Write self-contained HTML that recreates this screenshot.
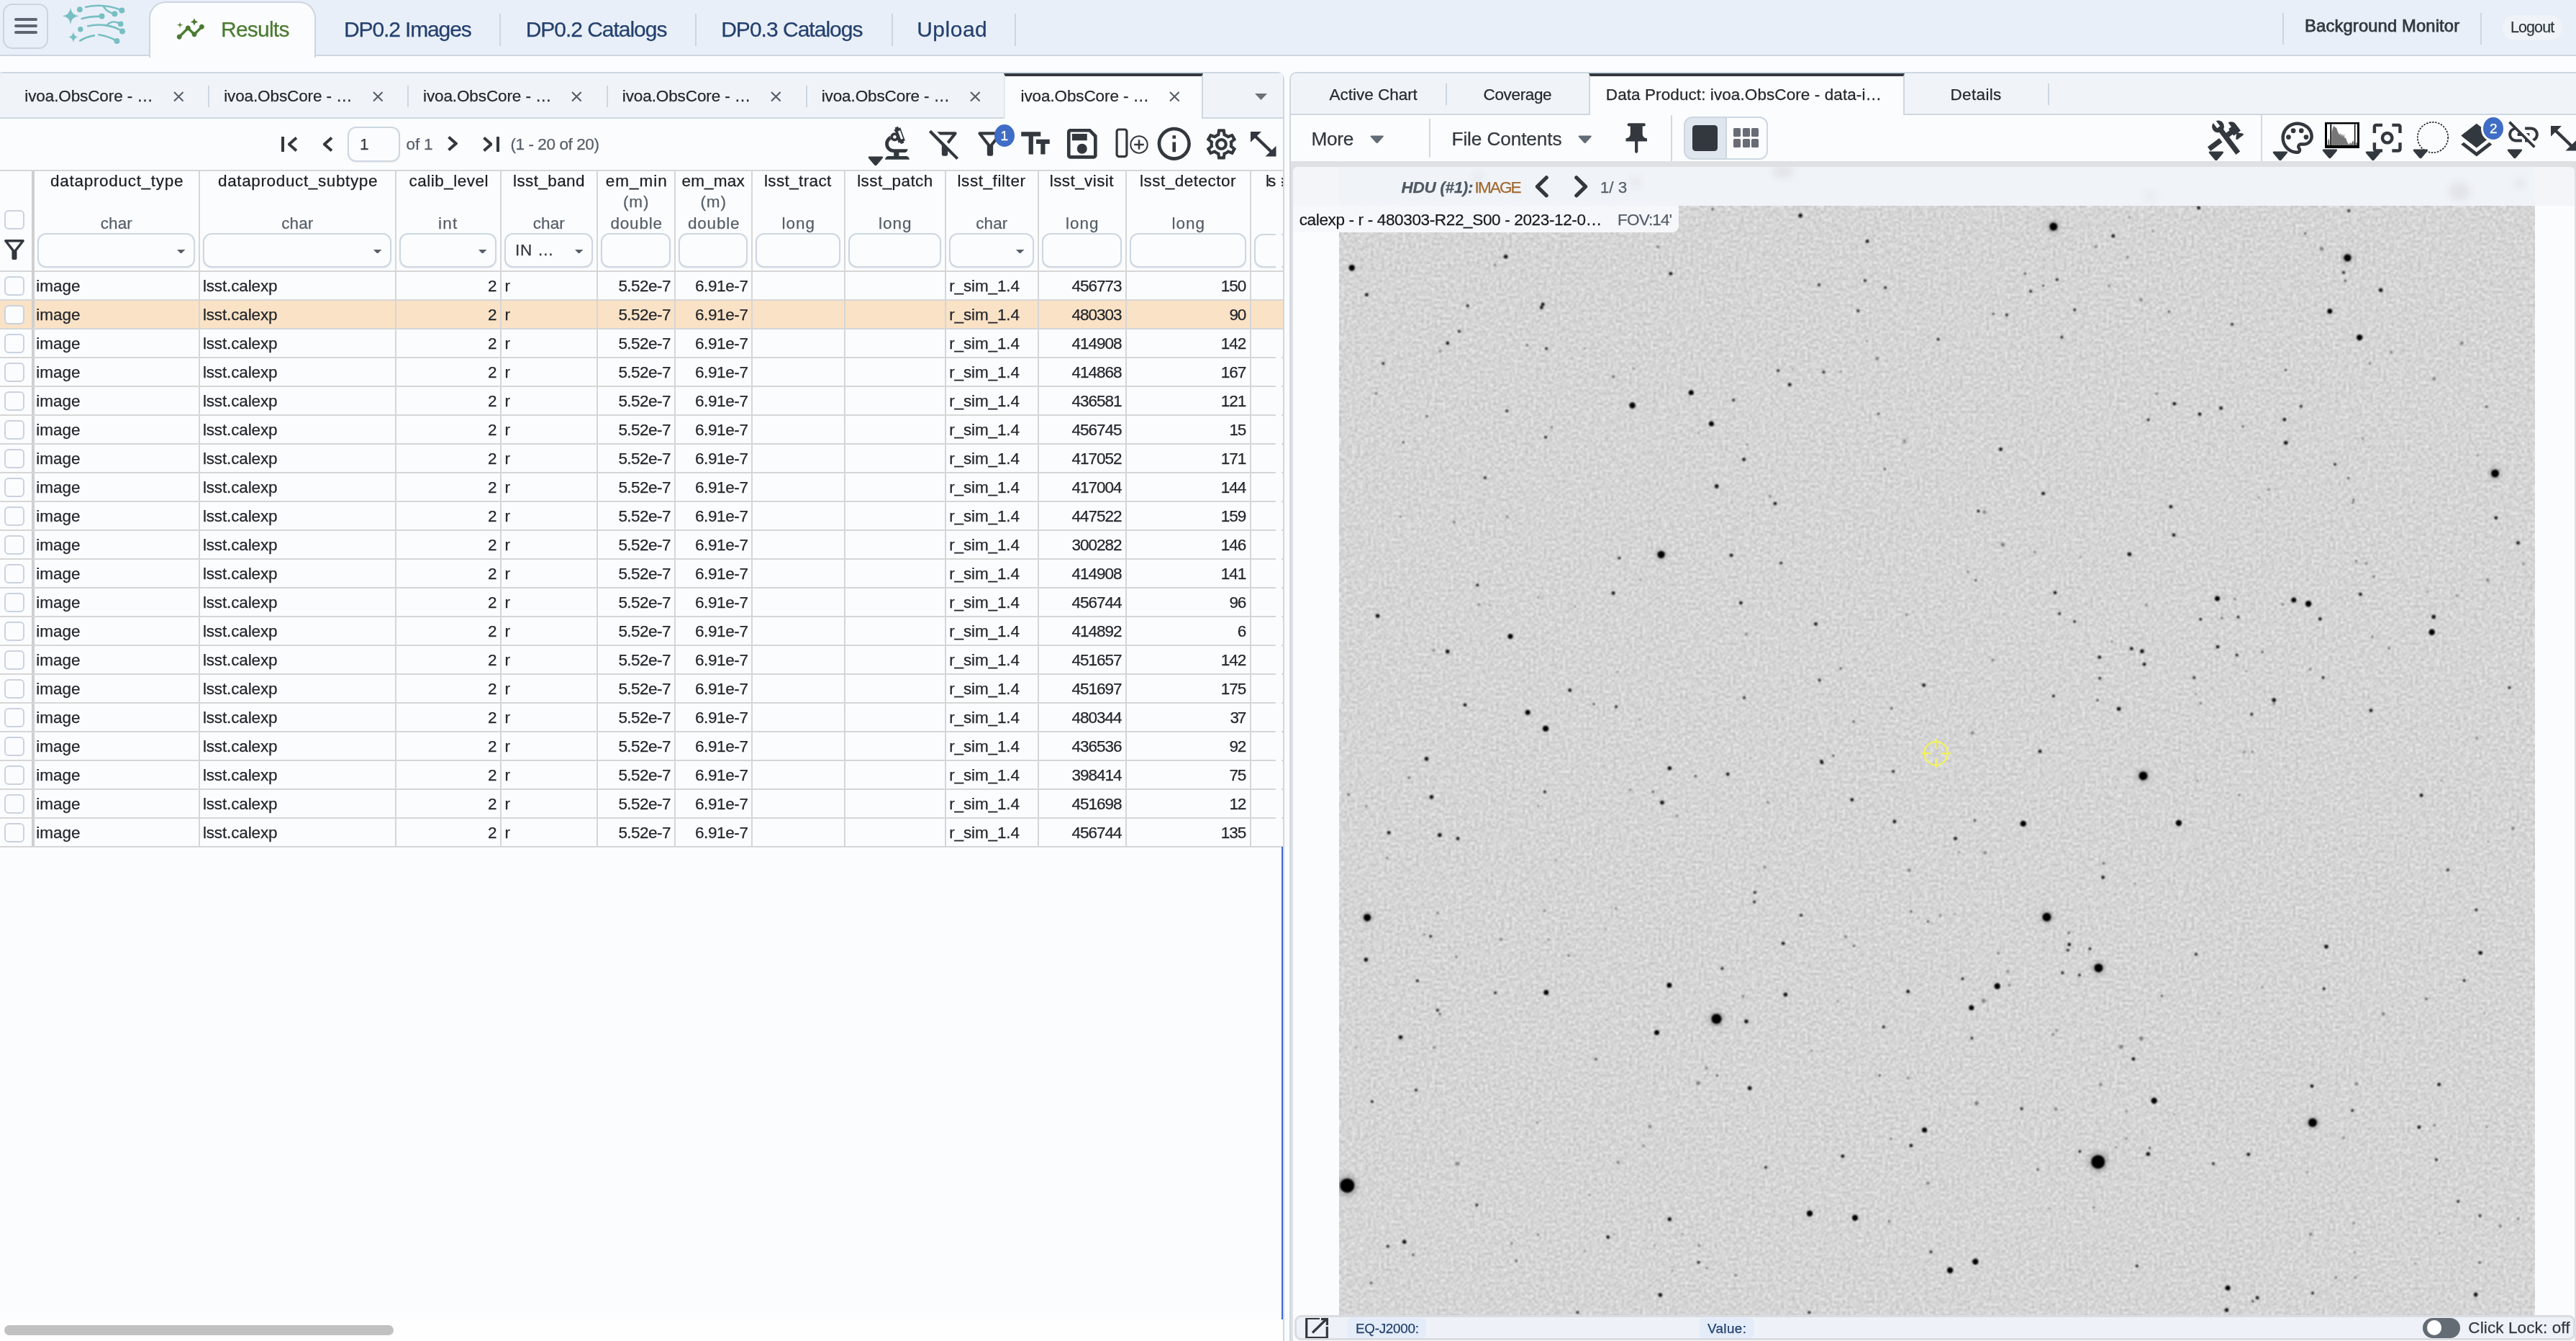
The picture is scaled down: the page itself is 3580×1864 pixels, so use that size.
<!DOCTYPE html>
<html lang="en"><head><meta charset="utf-8"><title>Rubin Science Platform Portal</title>
<style>
html,body{margin:0;padding:0;}
body{width:3580px;height:1864px;overflow:hidden;background:#FBFCFE;position:relative;font-family:"Liberation Sans",sans-serif;}
.b{position:absolute;box-sizing:border-box;display:block;}
.t{position:absolute;white-space:pre;line-height:normal;display:block;-webkit-text-stroke:0.25px currentColor;}
@media (max-width:2400px){#root{zoom:.5}}
#root{position:absolute;left:0;top:0;width:3580px;height:1864px;overflow:hidden;will-change:transform;}
</style></head><body><div id="root">
<div class="b" style="left:0px;top:0px;width:3580px;height:78px;background:#E9EFF8;border-bottom:2px solid #CDD5E1;"></div>
<div class="b" style="left:4px;top:5px;width:63px;height:63px;border:2px solid #CDD3DF;border-radius:13px;background:#E9EFF8;"></div>
<div class="b" style="left:20px;top:25.2px;width:32px;height:4px;background:#5F6470;border-radius:2px;"></div>
<div class="b" style="left:20px;top:34px;width:32px;height:4px;background:#5F6470;border-radius:2px;"></div>
<div class="b" style="left:20px;top:42.8px;width:32px;height:4px;background:#5F6470;border-radius:2px;"></div>
<svg class="b" style="left:80px;top:0px;filter:blur(0.5px);opacity:.95;" width="110" height="70" viewBox="80 0 110 70"><g fill="#72BDC1" stroke="none">
<path d="M98 10.8 Q99.2 21 109.8 22.2 Q99.2 23.4 98 33.8 Q96.8 23.4 86.6 22.2 Q96.8 21 98 10.8Z"/><circle cx="98" cy="22.2" r="3.4"/>
<path d="M101.9 44.2 Q102.7 50.8 108.8 51.6 Q102.7 52.4 101.9 59.3 Q101.1 52.4 94.9 51.6 Q101.1 50.8 101.9 44.2Z"/><circle cx="101.9" cy="51.6" r="2.2"/>
<circle cx="110.9" cy="13.2" r="3.9"/><circle cx="111.8" cy="40.8" r="3.7"/>
<circle cx="169.3" cy="14.4" r="4"/><circle cx="159.4" cy="19.2" r="4"/><circle cx="141.5" cy="22.6" r="4"/>
<circle cx="167.7" cy="33.4" r="3.8"/><circle cx="170" cy="43.6" r="4"/><circle cx="162.4" cy="57.1" r="4"/>
</g>
<g fill="none" stroke="#72BDC1" stroke-width="2.6" stroke-linecap="round">
<path d="M119.2 9.8 C134 6.4 152 7.6 169 14.2"/>
<path d="M144 9 C147 15 152 17.6 159 19.2"/>
<path d="M113.6 26 C122 23.4 132 22.6 141 22.6"/>
<path d="M122.2 36.2 C138 32.6 156 34.6 170 43.4"/>
<path d="M149.5 34.2 C154 29.6 161 29.4 167.5 33.2"/>
<path d="M111.2 56.6 C117 53 124 50.4 131 49.4"/>
<path d="M137.2 48.2 C146 49.4 155 52.6 162 56.8"/>
</g></svg>
<div class="b" style="left:207px;top:2px;width:232px;height:78px;background:#FBFCFE;border:2px solid #CDD5E1;border-bottom:none;border-radius:23px 23px 0 0;"></div>
<svg class="b" style="left:244.3px;top:20.3px;" width="41.6" height="41.6" viewBox="0 0 24 24"><g fill="#4B7A30"><path d="M21 8c-1.45 0-2.26 1.44-1.93 2.51l-3.55 3.56c-.3-.09-.74-.09-1.04 0l-2.55-2.55C12.27 10.45 11.46 9 10 9c-1.45 0-2.27 1.44-1.93 2.52l-4.56 4.55C2.44 15.74 1 16.55 1 18c0 1.1.9 2 2 2 1.45 0 2.26-1.44 1.93-2.51l4.55-4.56c.3.09.74.09 1.04 0l2.55 2.55C12.73 16.55 13.54 18 15 18c1.45 0 2.27-1.44 1.93-2.52l3.56-3.55c1.07.33 2.51-.48 2.51-1.93 0-1.1-.9-2-2-2z"/><path d="m15 9 .94-2.07L18 6l-2.06-.93L15 3l-.92 2.07L12 6l2.08.93zM3.5 11 4 9l2-.5L4 8l-.5-2L3 8l-2 .5L3 9z"/></g></svg>
<span class="t" style="left:307.00px;top:24.40px;font-size:30px;color:#4B7A30;letter-spacing:-0.772px;">Results</span>
<span class="t" style="left:478.00px;top:24.40px;font-size:30px;color:#24406E;letter-spacing:-1.127px;">DP0.2 Images</span>
<span class="t" style="left:730.70px;top:24.40px;font-size:30px;color:#24406E;letter-spacing:-1.032px;">DP0.2 Catalogs</span>
<span class="t" style="left:1002.20px;top:24.40px;font-size:30px;color:#24406E;letter-spacing:-0.986px;">DP0.3 Catalogs</span>
<span class="t" style="left:1274.20px;top:24.40px;font-size:30px;color:#24406E;letter-spacing:0.503px;">Upload</span>
<div class="b" style="left:693.6px;top:19px;width:2px;height:45px;background:#CDD5E1;"></div>
<div class="b" style="left:965.6px;top:19px;width:2px;height:45px;background:#CDD5E1;"></div>
<div class="b" style="left:1238.5px;top:19px;width:2px;height:45px;background:#CDD5E1;"></div>
<div class="b" style="left:1409.7px;top:19px;width:2px;height:45px;background:#CDD5E1;"></div>
<div class="b" style="left:3172px;top:18px;width:2px;height:44px;background:#CDD5E1;"></div>
<div class="b" style="left:3447.3px;top:18px;width:2px;height:44px;background:#CDD5E1;"></div>
<span class="t" style="left:3203.10px;top:22.10px;font-size:23.8px;color:#32383E;letter-spacing:0.121px;-webkit-text-stroke:0.75px #32383E;">Background Monitor</span>
<div class="b" style="left:3478px;top:20.5px;width:83px;height:35.5px;background:#F0F4F8;border-radius:18px;"></div>
<span class="t" style="left:3489.00px;top:26.40px;font-size:21.5px;color:#32383E;letter-spacing:-0.917px;">Logout</span>
<div class="b" style="left:-5px;top:100px;width:1790px;height:1800px;border:2px solid #CDD7E1;border-radius:10px;background:#FBFCFE;overflow:hidden;"></div>
<div class="b" style="left:0px;top:102px;width:1783px;height:63px;background:#F0F4F8;border-bottom:2px solid #CDD7E1;"></div>
<div class="b" style="left:289.0px;top:118.5px;width:2px;height:30.5px;background:#CDD7E1;"></div>
<span class="t" style="left:34.30px;top:120.60px;font-size:22.5px;color:#25282C;letter-spacing:-0.110px;">ivoa.ObsCore - …</span>
<svg class="b" style="left:240.7px;top:126.9px;" width="14.6" height="14.6" viewBox="0 0 14.6 14.6"><path d="M1 1L13.6 13.6M13.6 1L1 13.6" stroke="#555E68" stroke-width="2.1" fill="none"/></svg>
<div class="b" style="left:565.85px;top:118.5px;width:2px;height:30.5px;background:#CDD7E1;"></div>
<span class="t" style="left:311.15px;top:120.60px;font-size:22.5px;color:#25282C;letter-spacing:-0.110px;">ivoa.ObsCore - …</span>
<svg class="b" style="left:517.5500000000001px;top:126.9px;" width="14.6" height="14.6" viewBox="0 0 14.6 14.6"><path d="M1 1L13.6 13.6M13.6 1L1 13.6" stroke="#555E68" stroke-width="2.1" fill="none"/></svg>
<div class="b" style="left:842.7px;top:118.5px;width:2px;height:30.5px;background:#CDD7E1;"></div>
<span class="t" style="left:588.00px;top:120.60px;font-size:22.5px;color:#25282C;letter-spacing:-0.110px;">ivoa.ObsCore - …</span>
<svg class="b" style="left:794.4px;top:126.9px;" width="14.6" height="14.6" viewBox="0 0 14.6 14.6"><path d="M1 1L13.6 13.6M13.6 1L1 13.6" stroke="#555E68" stroke-width="2.1" fill="none"/></svg>
<div class="b" style="left:1119.5500000000002px;top:118.5px;width:2px;height:30.5px;background:#CDD7E1;"></div>
<span class="t" style="left:864.85px;top:120.60px;font-size:22.5px;color:#25282C;letter-spacing:-0.110px;">ivoa.ObsCore - …</span>
<svg class="b" style="left:1071.25px;top:126.9px;" width="14.6" height="14.6" viewBox="0 0 14.6 14.6"><path d="M1 1L13.6 13.6M13.6 1L1 13.6" stroke="#555E68" stroke-width="2.1" fill="none"/></svg>
<span class="t" style="left:1141.70px;top:120.60px;font-size:22.5px;color:#25282C;letter-spacing:-0.110px;">ivoa.ObsCore - …</span>
<svg class="b" style="left:1348.1000000000001px;top:126.9px;" width="14.6" height="14.6" viewBox="0 0 14.6 14.6"><path d="M1 1L13.6 13.6M13.6 1L1 13.6" stroke="#555E68" stroke-width="2.1" fill="none"/></svg>
<div class="b" style="left:1394.9px;top:102px;width:277.1px;height:63px;background:#FBFCFE;border-top:4px solid #32383E;border-right:2px solid #CDD7E1;border-left:2px solid #E3E8EE;"></div>
<span class="t" style="left:1418.55px;top:120.60px;font-size:22.5px;color:#25282C;letter-spacing:-0.110px;">ivoa.ObsCore - …</span>
<svg class="b" style="left:1624.95px;top:126.9px;" width="14.6" height="14.6" viewBox="0 0 14.6 14.6"><path d="M1 1L13.6 13.6M13.6 1L1 13.6" stroke="#555E68" stroke-width="2.1" fill="none"/></svg>
<svg class="b" style="left:1743.5px;top:130.4px;" width="17" height="9" viewBox="0 0 17 9"><path d="M0 0H17L8.5 9Z" fill="#6B7079"/></svg>
<div class="b" style="left:391.3px;top:189.6px;width:4px;height:21px;background:#32383E;"></div>
<svg class="b" style="left:399.6px;top:189.6px;" width="13.5" height="21" viewBox="0 0 13.5 21"><path d="M12.0 1.5L1.8 10.5L12.0 19.5" stroke="#32383E" stroke-width="4" fill="none" stroke-linejoin="miter"/></svg>
<svg class="b" style="left:449px;top:189.6px;" width="13.5" height="21" viewBox="0 0 13.5 21"><path d="M12.0 1.5L1.8 10.5L12.0 19.5" stroke="#32383E" stroke-width="4" fill="none" stroke-linejoin="miter"/></svg>
<div class="b" style="left:483.3px;top:176.2px;width:72.6px;height:48.4px;border:2px solid #CDD7E1;border-radius:12px;background:#FBFCFE;box-shadow:0 1px 2px rgba(21,21,21,.07);"></div>
<span class="t" style="left:500.00px;top:188.20px;font-size:22.5px;color:#32383E;">1</span>
<span class="t" style="left:564.60px;top:188.20px;font-size:22.5px;color:#555E68;letter-spacing:-0.205px;">of 1</span>
<svg class="b" style="left:622.3px;top:189.2px;" width="13.5" height="21" viewBox="0 0 13.5 21"><path d="M1.5 1.5L11.7 10.5L1.5 19.5" stroke="#32383E" stroke-width="4" fill="none" stroke-linejoin="miter"/></svg>
<svg class="b" style="left:670.8px;top:189.6px;" width="13.5" height="21" viewBox="0 0 13.5 21"><path d="M1.5 1.5L11.7 10.5L1.5 19.5" stroke="#32383E" stroke-width="4" fill="none" stroke-linejoin="miter"/></svg>
<div class="b" style="left:690.1px;top:189.6px;width:4px;height:21px;background:#32383E;"></div>
<span class="t" style="left:709.40px;top:188.40px;font-size:22.5px;color:#555E68;letter-spacing:-0.409px;">(1 - 20 of 20)</span>
<svg class="b" style="left:1206px;top:217.2px;" width="21.8" height="13.6" viewBox="0 0 21.8 13.6"><path d="M2.2 0.6H19.6Q22.400000000000002 0.8 20.2 3.4L12.5 12.6Q10.9 14.0 9.3 12.6L1.6 3.4Q-0.6 0.8 2.2 0.6Z" fill="#32383E"/></svg>
<svg class="b" style="left:1218.1px;top:171.4px;" width="58" height="58" viewBox="0 0 24 24"><g fill="#32383E"><path d="M7 19c-1.1 0-2 .9-2 2h14c0-1.1-.9-2-2-2h-4v-2h3c1.1 0 2-.9 2-2h-8c-1.66 0-3-1.34-3-3 0-1.09.59-2.04 1.46-2.56C8.17 9.03 8 8.54 8 8c0-.21.04-.42.09-.62C6.28 8.13 5 9.92 5 12c0 2.76 2.24 5 5 5v2H7z"/><circle cx="10.5" cy="8" r="2.5"/><path d="M10 3.98L10.94 3.63L10.6 2.69L12.48 2.01L12.82 2.95L13.76 2.61L16.5 10.13L15.56 10.47L15.9 11.41L14.02 12.09L13.68 11.15L12.74 11.49L12.15 9.87L11.5 6Z"/></g><circle cx="10.5" cy="8" r="0.95" fill="#FBFCFE"/><path d="M13.0 4.5L14.72 9.22" stroke="#FBFCFE" stroke-width="1.35" fill="none"/></svg>
<svg class="b" style="left:1288.2px;top:175.1px;" width="50" height="50" viewBox="0 0 24 24"><path fill="#32383E" d="m16.95 6-3.57 4.55 1.43 1.43c1.03-1.31 4.98-6.37 4.98-6.37C20.3 4.95 19.83 4 19 4H6.83l2 2h8.12zM2.81 2.81 1.39 4.22 10 13v6c0 .55.45 1 1 1h2c.55 0 1-.45 1-1v-2.17l5.78 5.78 1.41-1.41L2.81 2.81z"/></svg>
<svg class="b" style="left:1350.9px;top:175.1px;" width="50" height="50" viewBox="0 0 24 24"><path fill="#32383E" d="M7 6h10l-5.01 6.3L7 6zm-2.75-.39C6.27 8.2 10 13 10 13v6c0 .55.45 1 1 1h2c.55 0 1-.45 1-1v-6s3.72-4.8 5.74-7.39c.51-.66.04-1.61-.79-1.61H5.04c-.83 0-1.3.95-.79 1.61z"/></svg>
<div class="b" style="left:1381.8px;top:173.2px;width:28.2px;height:30.8px;background:#3F6DC5;border-radius:50%;"></div>
<span class="t" style="left:1390.40px;top:178.40px;font-size:19px;color:#fff;">1</span>
<svg class="b" style="left:1413.5px;top:175.1px;" width="50" height="50" viewBox="0 0 24 24"><path fill="#32383E" d="M2.5 4v3h5v12h3V7h5V4h-13zm19 5h-9v3h3v7h3v-7h3V9z"/></svg>
<svg class="b" style="left:1476px;top:172.1px;" width="55.6" height="55.6" viewBox="0 0 24 24"><path fill="#32383E" d="M17 3H5c-1.11 0-2 .9-2 2v14c0 1.1.89 2 2 2h14c1.1 0 2-.9 2-2V7l-4-4zm2 16H5V5h11.17L19 7.83V19zm-7-7c-1.66 0-3 1.34-3 3s1.34 3 3 3 3-1.34 3-3-1.34-3-3-3zM6 6h9v4H6z"/></svg>
<svg class="b" style="left:1548px;top:176px;" width="52" height="46" viewBox="0 0 52 46"><rect x="4.1" y="4" width="13.8" height="37.6" rx="3" fill="none" stroke="#32383E" stroke-width="3.2"/><circle cx="35" cy="25" r="11.7" fill="none" stroke="#32383E" stroke-width="2"/><path d="M28.2 25H41.8M35 18.2V31.8" stroke="#32383E" stroke-width="2.5" fill="none"/></svg>
<svg class="b" style="left:1604.3px;top:172.3px;" width="55.5" height="55.5" viewBox="0 0 24 24"><path fill="#32383E" d="M11 7h2v2h-2zm0 4h2v6h-2zm1-9C6.48 2 2 6.48 2 12s4.48 10 10 10 10-4.48 10-10S17.52 2 12 2zm0 18c-4.41 0-8-3.59-8-8s3.59-8 8-8 8 3.59 8 8-3.59 8-8 8z"/></svg>
<svg class="b" style="left:1672.1px;top:174.8px;" width="50.8" height="50.8" viewBox="0 0 24 24"><path fill="#32383E" d="M19.43 12.98c.04-.32.07-.64.07-.98 0-.34-.03-.66-.07-.98l2.11-1.65c.19-.15.24-.42.12-.64l-2-3.46c-.09-.16-.26-.25-.44-.25-.06 0-.12.01-.17.03l-2.49 1c-.52-.4-1.08-.73-1.69-.98l-.38-2.65C14.46 2.18 14.25 2 14 2h-4c-.25 0-.46.18-.49.42l-.38 2.65c-.61.25-1.17.59-1.69.98l-2.49-1c-.06-.02-.12-.03-.18-.03-.17 0-.34.09-.43.25l-2 3.46c-.13.22-.07.49.12.64l2.11 1.65c-.04.32-.07.65-.07.98 0 .33.03.66.07.98l-2.11 1.65c-.19.15-.24.42-.12.64l2 3.46c.09.16.26.25.44.25.06 0 .12-.01.17-.03l2.49-1c.52.4 1.08.73 1.69.98l.38 2.65c.03.24.24.42.49.42h4c.25 0 .46-.18.49-.42l.38-2.65c.61-.25 1.17-.59 1.69-.98l2.49 1c.06.02.12.03.18.03.17 0 .34-.09.43-.25l2-3.46c.12-.22.07-.49-.12-.64l-2.11-1.65zm-1.98-1.71c.04.31.05.52.05.73 0 .21-.02.43-.05.73l-.14 1.13.89.7 1.08.84-.7 1.21-1.27-.51-1.04-.42-.9.68c-.43.32-.84.56-1.25.73l-1.06.43-.16 1.13-.2 1.35h-1.4l-.19-1.35-.16-1.13-1.06-.43c-.43-.18-.83-.41-1.23-.71l-.91-.7-1.06.43-1.27.51-.7-1.21 1.08-.84.89-.7-.14-1.13c-.03-.31-.05-.54-.05-.74s.02-.43.05-.73l.14-1.13-.89-.7-1.08-.84.7-1.21 1.27.51 1.04.42.9-.68c.43-.32.84-.56 1.25-.73l1.06-.43.16-1.13.2-1.35h1.39l.19 1.35.16 1.13 1.06.43c.43.18.83.41 1.23.71l.91.7 1.06-.43 1.27-.51.7 1.21-1.07.85-.89.7.14 1.13zM12 8c-2.21 0-4 1.79-4 4s1.79 4 4 4 4-1.79 4-4-1.79-4-4-4zm0 6c-1.1 0-2-.9-2-2s.9-2 2-2 2 .9 2 2-.9 2-2 2z"/></svg>
<svg class="b" style="left:1738.3px;top:182.8px;" width="36" height="35" viewBox="0 0 36 35"><path d="M0 0H15L0 14.8Z M35.5 34.5H20.5L35.5 19.7Z" fill="#32383E"/><path d="M5 5L30.5 29.5" stroke="#32383E" stroke-width="4.4"/></svg>
<div class="b" style="left:0px;top:236px;width:1783px;height:2px;background:#D6D6D6;"></div>
<div class="b" style="left:0px;top:376px;width:1783px;height:2px;background:#D6D6D6;"></div>
<div class="b" style="left:44.3px;top:238px;width:4px;height:938px;background:#CFCFCF;"></div>
<span class="t" style="left:70.10px;top:238.50px;font-size:22.5px;color:#1B1E22;letter-spacing:0.696px;">dataproduct_type</span>
<span class="t" style="left:139.65px;top:297.50px;font-size:22.5px;color:#555E68;letter-spacing:0.141px;">char</span>
<div class="b" style="left:276px;top:238px;width:2px;height:938px;background:#D6D6D6;"></div>
<div class="b" style="left:51.8px;top:324.2px;width:219.2px;height:47.8px;border:2px solid #CDD7E1;border-radius:12px;background:#FBFCFE;box-shadow:0 1px 2px rgba(21,21,21,.07);"></div>
<svg class="b" style="left:245.8px;top:346.5px;" width="11.2" height="5.8" viewBox="0 0 11.2 5.8"><path d="M0 0H11.2L5.6 5.8Z" fill="#555E68"/></svg>
<span class="t" style="left:303.10px;top:238.50px;font-size:22.5px;color:#1B1E22;letter-spacing:0.620px;">dataproduct_subtype</span>
<span class="t" style="left:391.15px;top:297.50px;font-size:22.5px;color:#555E68;letter-spacing:0.141px;">char</span>
<div class="b" style="left:549px;top:238px;width:2px;height:938px;background:#D6D6D6;"></div>
<div class="b" style="left:281.8px;top:324.2px;width:262.2px;height:47.8px;border:2px solid #CDD7E1;border-radius:12px;background:#FBFCFE;box-shadow:0 1px 2px rgba(21,21,21,.07);"></div>
<svg class="b" style="left:518.8px;top:346.5px;" width="11.2" height="5.8" viewBox="0 0 11.2 5.8"><path d="M0 0H11.2L5.6 5.8Z" fill="#555E68"/></svg>
<span class="t" style="left:568.50px;top:238.50px;font-size:22.5px;color:#1B1E22;letter-spacing:0.494px;">calib_level</span>
<span class="t" style="left:608.90px;top:297.50px;font-size:22.5px;color:#555E68;letter-spacing:1.344px;">int</span>
<div class="b" style="left:695px;top:238px;width:2px;height:938px;background:#D6D6D6;"></div>
<div class="b" style="left:554.8px;top:324.2px;width:135.20000000000005px;height:47.8px;border:2px solid #CDD7E1;border-radius:12px;background:#FBFCFE;box-shadow:0 1px 2px rgba(21,21,21,.07);"></div>
<svg class="b" style="left:664.8px;top:346.5px;" width="11.2" height="5.8" viewBox="0 0 11.2 5.8"><path d="M0 0H11.2L5.6 5.8Z" fill="#555E68"/></svg>
<span class="t" style="left:713.05px;top:238.50px;font-size:22.5px;color:#1B1E22;letter-spacing:0.387px;">lsst_band</span>
<span class="t" style="left:740.65px;top:297.50px;font-size:22.5px;color:#555E68;letter-spacing:0.141px;">char</span>
<div class="b" style="left:829px;top:238px;width:2px;height:938px;background:#D6D6D6;"></div>
<div class="b" style="left:700.8px;top:324.2px;width:123.20000000000005px;height:47.8px;border:2px solid #CDD7E1;border-radius:12px;background:#FBFCFE;box-shadow:0 1px 2px rgba(21,21,21,.07);"></div>
<svg class="b" style="left:798.8px;top:346.5px;" width="11.2" height="5.8" viewBox="0 0 11.2 5.8"><path d="M0 0H11.2L5.6 5.8Z" fill="#555E68"/></svg>
<span class="t" style="left:716.00px;top:334.50px;font-size:22.5px;color:#32383E;letter-spacing:0.750px;">IN …</span>
<span class="t" style="left:841.85px;top:238.50px;font-size:22.5px;color:#1B1E22;letter-spacing:0.958px;">em_min</span>
<span class="t" style="left:865.95px;top:267.50px;font-size:22.5px;color:#555E68;letter-spacing:0.932px;">(m)</span>
<span class="t" style="left:848.50px;top:297.50px;font-size:22.5px;color:#555E68;letter-spacing:0.790px;">double</span>
<div class="b" style="left:937px;top:238px;width:2px;height:938px;background:#D6D6D6;"></div>
<div class="b" style="left:834.8px;top:324.2px;width:97.20000000000005px;height:47.8px;border:2px solid #CDD7E1;border-radius:12px;background:#FBFCFE;box-shadow:0 1px 2px rgba(21,21,21,.07);"></div>
<span class="t" style="left:947.45px;top:238.50px;font-size:22.5px;color:#1B1E22;letter-spacing:0.215px;">em_max</span>
<span class="t" style="left:973.45px;top:267.50px;font-size:22.5px;color:#555E68;letter-spacing:0.932px;">(m)</span>
<span class="t" style="left:956.00px;top:297.50px;font-size:22.5px;color:#555E68;letter-spacing:0.790px;">double</span>
<div class="b" style="left:1044px;top:238px;width:2px;height:938px;background:#D6D6D6;"></div>
<div class="b" style="left:942.8px;top:324.2px;width:96.20000000000005px;height:47.8px;border:2px solid #CDD7E1;border-radius:12px;background:#FBFCFE;box-shadow:0 1px 2px rgba(21,21,21,.07);"></div>
<span class="t" style="left:1061.90px;top:238.50px;font-size:22.5px;color:#1B1E22;letter-spacing:0.381px;">lsst_tract</span>
<span class="t" style="left:1086.55px;top:297.50px;font-size:22.5px;color:#555E68;letter-spacing:0.958px;">long</span>
<div class="b" style="left:1173px;top:238px;width:2px;height:938px;background:#D6D6D6;"></div>
<div class="b" style="left:1049.8px;top:324.2px;width:118.20000000000005px;height:47.8px;border:2px solid #CDD7E1;border-radius:12px;background:#FBFCFE;box-shadow:0 1px 2px rgba(21,21,21,.07);"></div>
<span class="t" style="left:1191.20px;top:238.50px;font-size:22.5px;color:#1B1E22;letter-spacing:0.423px;">lsst_patch</span>
<span class="t" style="left:1221.05px;top:297.50px;font-size:22.5px;color:#555E68;letter-spacing:0.958px;">long</span>
<div class="b" style="left:1313px;top:238px;width:2px;height:938px;background:#D6D6D6;"></div>
<div class="b" style="left:1178.8px;top:324.2px;width:129.20000000000005px;height:47.8px;border:2px solid #CDD7E1;border-radius:12px;background:#FBFCFE;box-shadow:0 1px 2px rgba(21,21,21,.07);"></div>
<span class="t" style="left:1330.50px;top:238.50px;font-size:22.5px;color:#1B1E22;letter-spacing:0.572px;">lsst_filter</span>
<span class="t" style="left:1356.15px;top:297.50px;font-size:22.5px;color:#555E68;letter-spacing:0.141px;">char</span>
<div class="b" style="left:1442px;top:238px;width:2px;height:938px;background:#D6D6D6;"></div>
<div class="b" style="left:1318.8px;top:324.2px;width:118.20000000000005px;height:47.8px;border:2px solid #CDD7E1;border-radius:12px;background:#FBFCFE;box-shadow:0 1px 2px rgba(21,21,21,.07);"></div>
<svg class="b" style="left:1411.8px;top:346.5px;" width="11.2" height="5.8" viewBox="0 0 11.2 5.8"><path d="M0 0H11.2L5.6 5.8Z" fill="#555E68"/></svg>
<span class="t" style="left:1458.75px;top:238.50px;font-size:22.5px;color:#1B1E22;letter-spacing:0.415px;">lsst_visit</span>
<span class="t" style="left:1481.05px;top:297.50px;font-size:22.5px;color:#555E68;letter-spacing:0.958px;">long</span>
<div class="b" style="left:1564px;top:238px;width:2px;height:938px;background:#D6D6D6;"></div>
<div class="b" style="left:1447.8px;top:324.2px;width:111.20000000000005px;height:47.8px;border:2px solid #CDD7E1;border-radius:12px;background:#FBFCFE;box-shadow:0 1px 2px rgba(21,21,21,.07);"></div>
<span class="t" style="left:1584.10px;top:238.50px;font-size:22.5px;color:#1B1E22;letter-spacing:0.478px;">lsst_detector</span>
<span class="t" style="left:1628.55px;top:297.50px;font-size:22.5px;color:#555E68;letter-spacing:0.958px;">long</span>
<div class="b" style="left:1737px;top:238px;width:2px;height:938px;background:#D6D6D6;"></div>
<div class="b" style="left:1569.8px;top:324.2px;width:162.20000000000005px;height:47.8px;border:2px solid #CDD7E1;border-radius:12px;background:#FBFCFE;box-shadow:0 1px 2px rgba(21,21,21,.07);"></div>
<span class="t" style="left:1759.00px;top:238.50px;font-size:22.5px;color:#1B1E22;letter-spacing:-1.899px;">ls</span>
<div class="b" style="left:1780.6px;top:238px;width:2.7px;height:40px;overflow:hidden"><span class="t" style="left:-6.2px;top:0.5px;font-size:22.5px;color:#1B1E22">s</span></div>
<div class="b" style="left:1742px;top:325px;width:31.1px;height:52px;overflow:hidden"><div class="b" style="left:1.3px;top:0;width:80px;height:47px;border:2px solid #CDD7E1;border-radius:12px;background:#FBFCFE;box-shadow:0 1px 2px rgba(21,21,21,.07);"></div></div>
<div class="b" style="left:1780.6px;top:325px;width:2.7px;height:52px;overflow:hidden"><div class="b" style="left:-37.3px;top:0;width:80px;height:47px;border:2px solid #CDD7E1;border-radius:12px;background:#FBFCFE;box-shadow:0 1px 2px rgba(21,21,21,.07);"></div></div>
<div class="b" style="left:6.3px;top:291.6px;width:27.4px;height:27px;border:2px solid #C9D3DF;border-radius:6px;background:#FBFCFE;"></div>
<svg class="b" style="left:-0.75px;top:325.5px;" width="41.9" height="41.9" viewBox="0 0 24 24"><path fill="#32383E" d="M7 6h10l-5.01 6.3L7 6zm-2.75-.39C6.27 8.2 10 13 10 13v6c0 .55.45 1 1 1h2c.55 0 1-.45 1-1v-6s3.72-4.8 5.74-7.39c.51-.66.04-1.61-.79-1.61H5.04c-.83 0-1.3.95-.79 1.61z"/></svg>
<div class="b" style="left:0px;top:416px;width:1783.3px;height:2px;background:#D6D6D6;"></div>
<div class="b" style="left:6.3px;top:383.6px;width:27.4px;height:27px;border:2px solid #C9D3DF;border-radius:6px;background:#FBFCFE;"></div>
<span class="t" style="left:50.20px;top:384.80px;font-size:22.5px;color:#23262B;letter-spacing:0.008px;">image</span>
<span class="t" style="left:281.90px;top:384.80px;font-size:22.5px;color:#23262B;letter-spacing:-0.133px;">lsst.calexp</span>
<span class="t" style="left:678.00px;top:384.80px;font-size:22.5px;color:#23262B;">2</span>
<span class="t" style="left:701.50px;top:384.80px;font-size:22.5px;color:#23262B;">r</span>
<span class="t" style="left:859.40px;top:384.80px;font-size:22.5px;color:#23262B;letter-spacing:-0.533px;">5.52e-7</span>
<span class="t" style="left:965.90px;top:384.80px;font-size:22.5px;color:#23262B;letter-spacing:-0.366px;">6.91e-7</span>
<span class="t" style="left:1319.20px;top:384.80px;font-size:22.5px;color:#23262B;letter-spacing:-0.122px;">r_sim_1.4</span>
<span class="t" style="left:1489.40px;top:384.80px;font-size:22.5px;color:#23262B;letter-spacing:-1.013px;">456773</span>
<span class="t" style="left:1696.75px;top:384.80px;font-size:22.5px;color:#23262B;letter-spacing:-1.038px;">150</span>
<div class="b" style="left:0px;top:418px;width:1783px;height:38px;background:#FAE2C6;"></div>
<div class="b" style="left:44.3px;top:418px;width:4px;height:38px;background:#CFCFCF;"></div>
<div class="b" style="left:276px;top:418px;width:2px;height:38px;background:#D6D6D6;"></div>
<div class="b" style="left:549px;top:418px;width:2px;height:38px;background:#D6D6D6;"></div>
<div class="b" style="left:695px;top:418px;width:2px;height:38px;background:#D6D6D6;"></div>
<div class="b" style="left:829px;top:418px;width:2px;height:38px;background:#D6D6D6;"></div>
<div class="b" style="left:937px;top:418px;width:2px;height:38px;background:#D6D6D6;"></div>
<div class="b" style="left:1044px;top:418px;width:2px;height:38px;background:#D6D6D6;"></div>
<div class="b" style="left:1173px;top:418px;width:2px;height:38px;background:#D6D6D6;"></div>
<div class="b" style="left:1313px;top:418px;width:2px;height:38px;background:#D6D6D6;"></div>
<div class="b" style="left:1442px;top:418px;width:2px;height:38px;background:#D6D6D6;"></div>
<div class="b" style="left:1564px;top:418px;width:2px;height:38px;background:#D6D6D6;"></div>
<div class="b" style="left:1737px;top:418px;width:2px;height:38px;background:#D6D6D6;"></div>
<div class="b" style="left:0px;top:456px;width:1783.3px;height:2px;background:#D6D6D6;"></div>
<div class="b" style="left:6.3px;top:423.6px;width:27.4px;height:27px;border:2px solid #C9D3DF;border-radius:6px;background:#FBFCFE;"></div>
<span class="t" style="left:50.20px;top:424.80px;font-size:22.5px;color:#23262B;letter-spacing:0.008px;">image</span>
<span class="t" style="left:281.90px;top:424.80px;font-size:22.5px;color:#23262B;letter-spacing:-0.133px;">lsst.calexp</span>
<span class="t" style="left:678.00px;top:424.80px;font-size:22.5px;color:#23262B;">2</span>
<span class="t" style="left:701.50px;top:424.80px;font-size:22.5px;color:#23262B;">r</span>
<span class="t" style="left:859.40px;top:424.80px;font-size:22.5px;color:#23262B;letter-spacing:-0.533px;">5.52e-7</span>
<span class="t" style="left:965.90px;top:424.80px;font-size:22.5px;color:#23262B;letter-spacing:-0.366px;">6.91e-7</span>
<span class="t" style="left:1319.20px;top:424.80px;font-size:22.5px;color:#23262B;letter-spacing:-0.122px;">r_sim_1.4</span>
<span class="t" style="left:1489.40px;top:424.80px;font-size:22.5px;color:#23262B;letter-spacing:-1.013px;">480303</span>
<span class="t" style="left:1708.60px;top:424.80px;font-size:22.5px;color:#23262B;letter-spacing:-1.413px;">90</span>
<div class="b" style="left:0px;top:496px;width:1773px;height:2px;background:#D6D6D6;"></div>
<div class="b" style="left:1781px;top:496px;width:2.3px;height:2px;background:#D6D6D6;"></div>
<div class="b" style="left:6.3px;top:463.6px;width:27.4px;height:27px;border:2px solid #C9D3DF;border-radius:6px;background:#FBFCFE;"></div>
<span class="t" style="left:50.20px;top:464.80px;font-size:22.5px;color:#23262B;letter-spacing:0.008px;">image</span>
<span class="t" style="left:281.90px;top:464.80px;font-size:22.5px;color:#23262B;letter-spacing:-0.133px;">lsst.calexp</span>
<span class="t" style="left:678.00px;top:464.80px;font-size:22.5px;color:#23262B;">2</span>
<span class="t" style="left:701.50px;top:464.80px;font-size:22.5px;color:#23262B;">r</span>
<span class="t" style="left:859.40px;top:464.80px;font-size:22.5px;color:#23262B;letter-spacing:-0.533px;">5.52e-7</span>
<span class="t" style="left:965.90px;top:464.80px;font-size:22.5px;color:#23262B;letter-spacing:-0.366px;">6.91e-7</span>
<span class="t" style="left:1319.20px;top:464.80px;font-size:22.5px;color:#23262B;letter-spacing:-0.122px;">r_sim_1.4</span>
<span class="t" style="left:1489.40px;top:464.80px;font-size:22.5px;color:#23262B;letter-spacing:-1.013px;">414908</span>
<span class="t" style="left:1696.75px;top:464.80px;font-size:22.5px;color:#23262B;letter-spacing:-1.038px;">142</span>
<div class="b" style="left:0px;top:536px;width:1773px;height:2px;background:#D6D6D6;"></div>
<div class="b" style="left:1781px;top:536px;width:2.3px;height:2px;background:#D6D6D6;"></div>
<div class="b" style="left:6.3px;top:503.6px;width:27.4px;height:27px;border:2px solid #C9D3DF;border-radius:6px;background:#FBFCFE;"></div>
<span class="t" style="left:50.20px;top:504.80px;font-size:22.5px;color:#23262B;letter-spacing:0.008px;">image</span>
<span class="t" style="left:281.90px;top:504.80px;font-size:22.5px;color:#23262B;letter-spacing:-0.133px;">lsst.calexp</span>
<span class="t" style="left:678.00px;top:504.80px;font-size:22.5px;color:#23262B;">2</span>
<span class="t" style="left:701.50px;top:504.80px;font-size:22.5px;color:#23262B;">r</span>
<span class="t" style="left:859.40px;top:504.80px;font-size:22.5px;color:#23262B;letter-spacing:-0.533px;">5.52e-7</span>
<span class="t" style="left:965.90px;top:504.80px;font-size:22.5px;color:#23262B;letter-spacing:-0.366px;">6.91e-7</span>
<span class="t" style="left:1319.20px;top:504.80px;font-size:22.5px;color:#23262B;letter-spacing:-0.122px;">r_sim_1.4</span>
<span class="t" style="left:1489.40px;top:504.80px;font-size:22.5px;color:#23262B;letter-spacing:-1.013px;">414868</span>
<span class="t" style="left:1696.75px;top:504.80px;font-size:22.5px;color:#23262B;letter-spacing:-1.038px;">167</span>
<div class="b" style="left:0px;top:576px;width:1773px;height:2px;background:#D6D6D6;"></div>
<div class="b" style="left:1781px;top:576px;width:2.3px;height:2px;background:#D6D6D6;"></div>
<div class="b" style="left:6.3px;top:543.6px;width:27.4px;height:27px;border:2px solid #C9D3DF;border-radius:6px;background:#FBFCFE;"></div>
<span class="t" style="left:50.20px;top:544.80px;font-size:22.5px;color:#23262B;letter-spacing:0.008px;">image</span>
<span class="t" style="left:281.90px;top:544.80px;font-size:22.5px;color:#23262B;letter-spacing:-0.133px;">lsst.calexp</span>
<span class="t" style="left:678.00px;top:544.80px;font-size:22.5px;color:#23262B;">2</span>
<span class="t" style="left:701.50px;top:544.80px;font-size:22.5px;color:#23262B;">r</span>
<span class="t" style="left:859.40px;top:544.80px;font-size:22.5px;color:#23262B;letter-spacing:-0.533px;">5.52e-7</span>
<span class="t" style="left:965.90px;top:544.80px;font-size:22.5px;color:#23262B;letter-spacing:-0.366px;">6.91e-7</span>
<span class="t" style="left:1319.20px;top:544.80px;font-size:22.5px;color:#23262B;letter-spacing:-0.122px;">r_sim_1.4</span>
<span class="t" style="left:1489.40px;top:544.80px;font-size:22.5px;color:#23262B;letter-spacing:-1.013px;">436581</span>
<span class="t" style="left:1696.75px;top:544.80px;font-size:22.5px;color:#23262B;letter-spacing:-1.038px;">121</span>
<div class="b" style="left:0px;top:616px;width:1773px;height:2px;background:#D6D6D6;"></div>
<div class="b" style="left:1781px;top:616px;width:2.3px;height:2px;background:#D6D6D6;"></div>
<div class="b" style="left:6.3px;top:583.6px;width:27.4px;height:27px;border:2px solid #C9D3DF;border-radius:6px;background:#FBFCFE;"></div>
<span class="t" style="left:50.20px;top:584.80px;font-size:22.5px;color:#23262B;letter-spacing:0.008px;">image</span>
<span class="t" style="left:281.90px;top:584.80px;font-size:22.5px;color:#23262B;letter-spacing:-0.133px;">lsst.calexp</span>
<span class="t" style="left:678.00px;top:584.80px;font-size:22.5px;color:#23262B;">2</span>
<span class="t" style="left:701.50px;top:584.80px;font-size:22.5px;color:#23262B;">r</span>
<span class="t" style="left:859.40px;top:584.80px;font-size:22.5px;color:#23262B;letter-spacing:-0.533px;">5.52e-7</span>
<span class="t" style="left:965.90px;top:584.80px;font-size:22.5px;color:#23262B;letter-spacing:-0.366px;">6.91e-7</span>
<span class="t" style="left:1319.20px;top:584.80px;font-size:22.5px;color:#23262B;letter-spacing:-0.122px;">r_sim_1.4</span>
<span class="t" style="left:1489.40px;top:584.80px;font-size:22.5px;color:#23262B;letter-spacing:-1.013px;">456745</span>
<span class="t" style="left:1708.60px;top:584.80px;font-size:22.5px;color:#23262B;letter-spacing:-1.413px;">15</span>
<div class="b" style="left:0px;top:656px;width:1773px;height:2px;background:#D6D6D6;"></div>
<div class="b" style="left:1781px;top:656px;width:2.3px;height:2px;background:#D6D6D6;"></div>
<div class="b" style="left:6.3px;top:623.6px;width:27.4px;height:27px;border:2px solid #C9D3DF;border-radius:6px;background:#FBFCFE;"></div>
<span class="t" style="left:50.20px;top:624.80px;font-size:22.5px;color:#23262B;letter-spacing:0.008px;">image</span>
<span class="t" style="left:281.90px;top:624.80px;font-size:22.5px;color:#23262B;letter-spacing:-0.133px;">lsst.calexp</span>
<span class="t" style="left:678.00px;top:624.80px;font-size:22.5px;color:#23262B;">2</span>
<span class="t" style="left:701.50px;top:624.80px;font-size:22.5px;color:#23262B;">r</span>
<span class="t" style="left:859.40px;top:624.80px;font-size:22.5px;color:#23262B;letter-spacing:-0.533px;">5.52e-7</span>
<span class="t" style="left:965.90px;top:624.80px;font-size:22.5px;color:#23262B;letter-spacing:-0.366px;">6.91e-7</span>
<span class="t" style="left:1319.20px;top:624.80px;font-size:22.5px;color:#23262B;letter-spacing:-0.122px;">r_sim_1.4</span>
<span class="t" style="left:1489.40px;top:624.80px;font-size:22.5px;color:#23262B;letter-spacing:-1.013px;">417052</span>
<span class="t" style="left:1696.75px;top:624.80px;font-size:22.5px;color:#23262B;letter-spacing:-1.038px;">171</span>
<div class="b" style="left:0px;top:696px;width:1773px;height:2px;background:#D6D6D6;"></div>
<div class="b" style="left:1781px;top:696px;width:2.3px;height:2px;background:#D6D6D6;"></div>
<div class="b" style="left:6.3px;top:663.6px;width:27.4px;height:27px;border:2px solid #C9D3DF;border-radius:6px;background:#FBFCFE;"></div>
<span class="t" style="left:50.20px;top:664.80px;font-size:22.5px;color:#23262B;letter-spacing:0.008px;">image</span>
<span class="t" style="left:281.90px;top:664.80px;font-size:22.5px;color:#23262B;letter-spacing:-0.133px;">lsst.calexp</span>
<span class="t" style="left:678.00px;top:664.80px;font-size:22.5px;color:#23262B;">2</span>
<span class="t" style="left:701.50px;top:664.80px;font-size:22.5px;color:#23262B;">r</span>
<span class="t" style="left:859.40px;top:664.80px;font-size:22.5px;color:#23262B;letter-spacing:-0.533px;">5.52e-7</span>
<span class="t" style="left:965.90px;top:664.80px;font-size:22.5px;color:#23262B;letter-spacing:-0.366px;">6.91e-7</span>
<span class="t" style="left:1319.20px;top:664.80px;font-size:22.5px;color:#23262B;letter-spacing:-0.122px;">r_sim_1.4</span>
<span class="t" style="left:1489.40px;top:664.80px;font-size:22.5px;color:#23262B;letter-spacing:-1.013px;">417004</span>
<span class="t" style="left:1696.75px;top:664.80px;font-size:22.5px;color:#23262B;letter-spacing:-1.038px;">144</span>
<div class="b" style="left:0px;top:736px;width:1773px;height:2px;background:#D6D6D6;"></div>
<div class="b" style="left:1781px;top:736px;width:2.3px;height:2px;background:#D6D6D6;"></div>
<div class="b" style="left:6.3px;top:703.6px;width:27.4px;height:27px;border:2px solid #C9D3DF;border-radius:6px;background:#FBFCFE;"></div>
<span class="t" style="left:50.20px;top:704.80px;font-size:22.5px;color:#23262B;letter-spacing:0.008px;">image</span>
<span class="t" style="left:281.90px;top:704.80px;font-size:22.5px;color:#23262B;letter-spacing:-0.133px;">lsst.calexp</span>
<span class="t" style="left:678.00px;top:704.80px;font-size:22.5px;color:#23262B;">2</span>
<span class="t" style="left:701.50px;top:704.80px;font-size:22.5px;color:#23262B;">r</span>
<span class="t" style="left:859.40px;top:704.80px;font-size:22.5px;color:#23262B;letter-spacing:-0.533px;">5.52e-7</span>
<span class="t" style="left:965.90px;top:704.80px;font-size:22.5px;color:#23262B;letter-spacing:-0.366px;">6.91e-7</span>
<span class="t" style="left:1319.20px;top:704.80px;font-size:22.5px;color:#23262B;letter-spacing:-0.122px;">r_sim_1.4</span>
<span class="t" style="left:1489.40px;top:704.80px;font-size:22.5px;color:#23262B;letter-spacing:-1.013px;">447522</span>
<span class="t" style="left:1696.75px;top:704.80px;font-size:22.5px;color:#23262B;letter-spacing:-1.038px;">159</span>
<div class="b" style="left:0px;top:776px;width:1773px;height:2px;background:#D6D6D6;"></div>
<div class="b" style="left:1781px;top:776px;width:2.3px;height:2px;background:#D6D6D6;"></div>
<div class="b" style="left:6.3px;top:743.6px;width:27.4px;height:27px;border:2px solid #C9D3DF;border-radius:6px;background:#FBFCFE;"></div>
<span class="t" style="left:50.20px;top:744.80px;font-size:22.5px;color:#23262B;letter-spacing:0.008px;">image</span>
<span class="t" style="left:281.90px;top:744.80px;font-size:22.5px;color:#23262B;letter-spacing:-0.133px;">lsst.calexp</span>
<span class="t" style="left:678.00px;top:744.80px;font-size:22.5px;color:#23262B;">2</span>
<span class="t" style="left:701.50px;top:744.80px;font-size:22.5px;color:#23262B;">r</span>
<span class="t" style="left:859.40px;top:744.80px;font-size:22.5px;color:#23262B;letter-spacing:-0.533px;">5.52e-7</span>
<span class="t" style="left:965.90px;top:744.80px;font-size:22.5px;color:#23262B;letter-spacing:-0.366px;">6.91e-7</span>
<span class="t" style="left:1319.20px;top:744.80px;font-size:22.5px;color:#23262B;letter-spacing:-0.122px;">r_sim_1.4</span>
<span class="t" style="left:1489.40px;top:744.80px;font-size:22.5px;color:#23262B;letter-spacing:-1.013px;">300282</span>
<span class="t" style="left:1696.75px;top:744.80px;font-size:22.5px;color:#23262B;letter-spacing:-1.038px;">146</span>
<div class="b" style="left:0px;top:816px;width:1773px;height:2px;background:#D6D6D6;"></div>
<div class="b" style="left:1781px;top:816px;width:2.3px;height:2px;background:#D6D6D6;"></div>
<div class="b" style="left:6.3px;top:783.6px;width:27.4px;height:27px;border:2px solid #C9D3DF;border-radius:6px;background:#FBFCFE;"></div>
<span class="t" style="left:50.20px;top:784.80px;font-size:22.5px;color:#23262B;letter-spacing:0.008px;">image</span>
<span class="t" style="left:281.90px;top:784.80px;font-size:22.5px;color:#23262B;letter-spacing:-0.133px;">lsst.calexp</span>
<span class="t" style="left:678.00px;top:784.80px;font-size:22.5px;color:#23262B;">2</span>
<span class="t" style="left:701.50px;top:784.80px;font-size:22.5px;color:#23262B;">r</span>
<span class="t" style="left:859.40px;top:784.80px;font-size:22.5px;color:#23262B;letter-spacing:-0.533px;">5.52e-7</span>
<span class="t" style="left:965.90px;top:784.80px;font-size:22.5px;color:#23262B;letter-spacing:-0.366px;">6.91e-7</span>
<span class="t" style="left:1319.20px;top:784.80px;font-size:22.5px;color:#23262B;letter-spacing:-0.122px;">r_sim_1.4</span>
<span class="t" style="left:1489.40px;top:784.80px;font-size:22.5px;color:#23262B;letter-spacing:-1.013px;">414908</span>
<span class="t" style="left:1696.75px;top:784.80px;font-size:22.5px;color:#23262B;letter-spacing:-1.038px;">141</span>
<div class="b" style="left:0px;top:856px;width:1773px;height:2px;background:#D6D6D6;"></div>
<div class="b" style="left:1781px;top:856px;width:2.3px;height:2px;background:#D6D6D6;"></div>
<div class="b" style="left:6.3px;top:823.6px;width:27.4px;height:27px;border:2px solid #C9D3DF;border-radius:6px;background:#FBFCFE;"></div>
<span class="t" style="left:50.20px;top:824.80px;font-size:22.5px;color:#23262B;letter-spacing:0.008px;">image</span>
<span class="t" style="left:281.90px;top:824.80px;font-size:22.5px;color:#23262B;letter-spacing:-0.133px;">lsst.calexp</span>
<span class="t" style="left:678.00px;top:824.80px;font-size:22.5px;color:#23262B;">2</span>
<span class="t" style="left:701.50px;top:824.80px;font-size:22.5px;color:#23262B;">r</span>
<span class="t" style="left:859.40px;top:824.80px;font-size:22.5px;color:#23262B;letter-spacing:-0.533px;">5.52e-7</span>
<span class="t" style="left:965.90px;top:824.80px;font-size:22.5px;color:#23262B;letter-spacing:-0.366px;">6.91e-7</span>
<span class="t" style="left:1319.20px;top:824.80px;font-size:22.5px;color:#23262B;letter-spacing:-0.122px;">r_sim_1.4</span>
<span class="t" style="left:1489.40px;top:824.80px;font-size:22.5px;color:#23262B;letter-spacing:-1.013px;">456744</span>
<span class="t" style="left:1708.60px;top:824.80px;font-size:22.5px;color:#23262B;letter-spacing:-1.413px;">96</span>
<div class="b" style="left:0px;top:896px;width:1773px;height:2px;background:#D6D6D6;"></div>
<div class="b" style="left:1781px;top:896px;width:2.3px;height:2px;background:#D6D6D6;"></div>
<div class="b" style="left:6.3px;top:863.6px;width:27.4px;height:27px;border:2px solid #C9D3DF;border-radius:6px;background:#FBFCFE;"></div>
<span class="t" style="left:50.20px;top:864.80px;font-size:22.5px;color:#23262B;letter-spacing:0.008px;">image</span>
<span class="t" style="left:281.90px;top:864.80px;font-size:22.5px;color:#23262B;letter-spacing:-0.133px;">lsst.calexp</span>
<span class="t" style="left:678.00px;top:864.80px;font-size:22.5px;color:#23262B;">2</span>
<span class="t" style="left:701.50px;top:864.80px;font-size:22.5px;color:#23262B;">r</span>
<span class="t" style="left:859.40px;top:864.80px;font-size:22.5px;color:#23262B;letter-spacing:-0.533px;">5.52e-7</span>
<span class="t" style="left:965.90px;top:864.80px;font-size:22.5px;color:#23262B;letter-spacing:-0.366px;">6.91e-7</span>
<span class="t" style="left:1319.20px;top:864.80px;font-size:22.5px;color:#23262B;letter-spacing:-0.122px;">r_sim_1.4</span>
<span class="t" style="left:1489.40px;top:864.80px;font-size:22.5px;color:#23262B;letter-spacing:-1.013px;">414892</span>
<span class="t" style="left:1719.70px;top:864.80px;font-size:22.5px;color:#23262B;">6</span>
<div class="b" style="left:0px;top:936px;width:1773px;height:2px;background:#D6D6D6;"></div>
<div class="b" style="left:1781px;top:936px;width:2.3px;height:2px;background:#D6D6D6;"></div>
<div class="b" style="left:6.3px;top:903.6px;width:27.4px;height:27px;border:2px solid #C9D3DF;border-radius:6px;background:#FBFCFE;"></div>
<span class="t" style="left:50.20px;top:904.80px;font-size:22.5px;color:#23262B;letter-spacing:0.008px;">image</span>
<span class="t" style="left:281.90px;top:904.80px;font-size:22.5px;color:#23262B;letter-spacing:-0.133px;">lsst.calexp</span>
<span class="t" style="left:678.00px;top:904.80px;font-size:22.5px;color:#23262B;">2</span>
<span class="t" style="left:701.50px;top:904.80px;font-size:22.5px;color:#23262B;">r</span>
<span class="t" style="left:859.40px;top:904.80px;font-size:22.5px;color:#23262B;letter-spacing:-0.533px;">5.52e-7</span>
<span class="t" style="left:965.90px;top:904.80px;font-size:22.5px;color:#23262B;letter-spacing:-0.366px;">6.91e-7</span>
<span class="t" style="left:1319.20px;top:904.80px;font-size:22.5px;color:#23262B;letter-spacing:-0.122px;">r_sim_1.4</span>
<span class="t" style="left:1489.40px;top:904.80px;font-size:22.5px;color:#23262B;letter-spacing:-1.013px;">451657</span>
<span class="t" style="left:1696.75px;top:904.80px;font-size:22.5px;color:#23262B;letter-spacing:-1.038px;">142</span>
<div class="b" style="left:0px;top:976px;width:1773px;height:2px;background:#D6D6D6;"></div>
<div class="b" style="left:1781px;top:976px;width:2.3px;height:2px;background:#D6D6D6;"></div>
<div class="b" style="left:6.3px;top:943.6px;width:27.4px;height:27px;border:2px solid #C9D3DF;border-radius:6px;background:#FBFCFE;"></div>
<span class="t" style="left:50.20px;top:944.80px;font-size:22.5px;color:#23262B;letter-spacing:0.008px;">image</span>
<span class="t" style="left:281.90px;top:944.80px;font-size:22.5px;color:#23262B;letter-spacing:-0.133px;">lsst.calexp</span>
<span class="t" style="left:678.00px;top:944.80px;font-size:22.5px;color:#23262B;">2</span>
<span class="t" style="left:701.50px;top:944.80px;font-size:22.5px;color:#23262B;">r</span>
<span class="t" style="left:859.40px;top:944.80px;font-size:22.5px;color:#23262B;letter-spacing:-0.533px;">5.52e-7</span>
<span class="t" style="left:965.90px;top:944.80px;font-size:22.5px;color:#23262B;letter-spacing:-0.366px;">6.91e-7</span>
<span class="t" style="left:1319.20px;top:944.80px;font-size:22.5px;color:#23262B;letter-spacing:-0.122px;">r_sim_1.4</span>
<span class="t" style="left:1489.40px;top:944.80px;font-size:22.5px;color:#23262B;letter-spacing:-1.013px;">451697</span>
<span class="t" style="left:1696.75px;top:944.80px;font-size:22.5px;color:#23262B;letter-spacing:-1.038px;">175</span>
<div class="b" style="left:0px;top:1016px;width:1773px;height:2px;background:#D6D6D6;"></div>
<div class="b" style="left:1781px;top:1016px;width:2.3px;height:2px;background:#D6D6D6;"></div>
<div class="b" style="left:6.3px;top:983.6px;width:27.4px;height:27px;border:2px solid #C9D3DF;border-radius:6px;background:#FBFCFE;"></div>
<span class="t" style="left:50.20px;top:984.80px;font-size:22.5px;color:#23262B;letter-spacing:0.008px;">image</span>
<span class="t" style="left:281.90px;top:984.80px;font-size:22.5px;color:#23262B;letter-spacing:-0.133px;">lsst.calexp</span>
<span class="t" style="left:678.00px;top:984.80px;font-size:22.5px;color:#23262B;">2</span>
<span class="t" style="left:701.50px;top:984.80px;font-size:22.5px;color:#23262B;">r</span>
<span class="t" style="left:859.40px;top:984.80px;font-size:22.5px;color:#23262B;letter-spacing:-0.533px;">5.52e-7</span>
<span class="t" style="left:965.90px;top:984.80px;font-size:22.5px;color:#23262B;letter-spacing:-0.366px;">6.91e-7</span>
<span class="t" style="left:1319.20px;top:984.80px;font-size:22.5px;color:#23262B;letter-spacing:-0.122px;">r_sim_1.4</span>
<span class="t" style="left:1489.40px;top:984.80px;font-size:22.5px;color:#23262B;letter-spacing:-1.013px;">480344</span>
<span class="t" style="left:1709.60px;top:984.80px;font-size:22.5px;color:#23262B;letter-spacing:-2.413px;">37</span>
<div class="b" style="left:0px;top:1056px;width:1773px;height:2px;background:#D6D6D6;"></div>
<div class="b" style="left:1781px;top:1056px;width:2.3px;height:2px;background:#D6D6D6;"></div>
<div class="b" style="left:6.3px;top:1023.6px;width:27.4px;height:27px;border:2px solid #C9D3DF;border-radius:6px;background:#FBFCFE;"></div>
<span class="t" style="left:50.20px;top:1024.80px;font-size:22.5px;color:#23262B;letter-spacing:0.008px;">image</span>
<span class="t" style="left:281.90px;top:1024.80px;font-size:22.5px;color:#23262B;letter-spacing:-0.133px;">lsst.calexp</span>
<span class="t" style="left:678.00px;top:1024.80px;font-size:22.5px;color:#23262B;">2</span>
<span class="t" style="left:701.50px;top:1024.80px;font-size:22.5px;color:#23262B;">r</span>
<span class="t" style="left:859.40px;top:1024.80px;font-size:22.5px;color:#23262B;letter-spacing:-0.533px;">5.52e-7</span>
<span class="t" style="left:965.90px;top:1024.80px;font-size:22.5px;color:#23262B;letter-spacing:-0.366px;">6.91e-7</span>
<span class="t" style="left:1319.20px;top:1024.80px;font-size:22.5px;color:#23262B;letter-spacing:-0.122px;">r_sim_1.4</span>
<span class="t" style="left:1489.40px;top:1024.80px;font-size:22.5px;color:#23262B;letter-spacing:-1.013px;">436536</span>
<span class="t" style="left:1708.60px;top:1024.80px;font-size:22.5px;color:#23262B;letter-spacing:-1.413px;">92</span>
<div class="b" style="left:0px;top:1096px;width:1773px;height:2px;background:#D6D6D6;"></div>
<div class="b" style="left:1781px;top:1096px;width:2.3px;height:2px;background:#D6D6D6;"></div>
<div class="b" style="left:6.3px;top:1063.6px;width:27.4px;height:27px;border:2px solid #C9D3DF;border-radius:6px;background:#FBFCFE;"></div>
<span class="t" style="left:50.20px;top:1064.80px;font-size:22.5px;color:#23262B;letter-spacing:0.008px;">image</span>
<span class="t" style="left:281.90px;top:1064.80px;font-size:22.5px;color:#23262B;letter-spacing:-0.133px;">lsst.calexp</span>
<span class="t" style="left:678.00px;top:1064.80px;font-size:22.5px;color:#23262B;">2</span>
<span class="t" style="left:701.50px;top:1064.80px;font-size:22.5px;color:#23262B;">r</span>
<span class="t" style="left:859.40px;top:1064.80px;font-size:22.5px;color:#23262B;letter-spacing:-0.533px;">5.52e-7</span>
<span class="t" style="left:965.90px;top:1064.80px;font-size:22.5px;color:#23262B;letter-spacing:-0.366px;">6.91e-7</span>
<span class="t" style="left:1319.20px;top:1064.80px;font-size:22.5px;color:#23262B;letter-spacing:-0.122px;">r_sim_1.4</span>
<span class="t" style="left:1489.40px;top:1064.80px;font-size:22.5px;color:#23262B;letter-spacing:-1.013px;">398414</span>
<span class="t" style="left:1708.60px;top:1064.80px;font-size:22.5px;color:#23262B;letter-spacing:-1.413px;">75</span>
<div class="b" style="left:0px;top:1136px;width:1773px;height:2px;background:#D6D6D6;"></div>
<div class="b" style="left:1781px;top:1136px;width:2.3px;height:2px;background:#D6D6D6;"></div>
<div class="b" style="left:6.3px;top:1103.6px;width:27.4px;height:27px;border:2px solid #C9D3DF;border-radius:6px;background:#FBFCFE;"></div>
<span class="t" style="left:50.20px;top:1104.80px;font-size:22.5px;color:#23262B;letter-spacing:0.008px;">image</span>
<span class="t" style="left:281.90px;top:1104.80px;font-size:22.5px;color:#23262B;letter-spacing:-0.133px;">lsst.calexp</span>
<span class="t" style="left:678.00px;top:1104.80px;font-size:22.5px;color:#23262B;">2</span>
<span class="t" style="left:701.50px;top:1104.80px;font-size:22.5px;color:#23262B;">r</span>
<span class="t" style="left:859.40px;top:1104.80px;font-size:22.5px;color:#23262B;letter-spacing:-0.533px;">5.52e-7</span>
<span class="t" style="left:965.90px;top:1104.80px;font-size:22.5px;color:#23262B;letter-spacing:-0.366px;">6.91e-7</span>
<span class="t" style="left:1319.20px;top:1104.80px;font-size:22.5px;color:#23262B;letter-spacing:-0.122px;">r_sim_1.4</span>
<span class="t" style="left:1489.40px;top:1104.80px;font-size:22.5px;color:#23262B;letter-spacing:-1.013px;">451698</span>
<span class="t" style="left:1708.60px;top:1104.80px;font-size:22.5px;color:#23262B;letter-spacing:-1.413px;">12</span>
<div class="b" style="left:0px;top:1176px;width:1783.3px;height:2px;background:#D6D6D6;"></div>
<div class="b" style="left:6.3px;top:1143.6px;width:27.4px;height:27px;border:2px solid #C9D3DF;border-radius:6px;background:#FBFCFE;"></div>
<span class="t" style="left:50.20px;top:1144.80px;font-size:22.5px;color:#23262B;letter-spacing:0.008px;">image</span>
<span class="t" style="left:281.90px;top:1144.80px;font-size:22.5px;color:#23262B;letter-spacing:-0.133px;">lsst.calexp</span>
<span class="t" style="left:678.00px;top:1144.80px;font-size:22.5px;color:#23262B;">2</span>
<span class="t" style="left:701.50px;top:1144.80px;font-size:22.5px;color:#23262B;">r</span>
<span class="t" style="left:859.40px;top:1144.80px;font-size:22.5px;color:#23262B;letter-spacing:-0.533px;">5.52e-7</span>
<span class="t" style="left:965.90px;top:1144.80px;font-size:22.5px;color:#23262B;letter-spacing:-0.366px;">6.91e-7</span>
<span class="t" style="left:1319.20px;top:1144.80px;font-size:22.5px;color:#23262B;letter-spacing:-0.122px;">r_sim_1.4</span>
<span class="t" style="left:1489.40px;top:1144.80px;font-size:22.5px;color:#23262B;letter-spacing:-1.013px;">456744</span>
<span class="t" style="left:1696.75px;top:1144.80px;font-size:22.5px;color:#23262B;letter-spacing:-1.038px;">135</span>
<div class="b" style="left:1781px;top:1177px;width:2px;height:657px;background:#3D6BC9;"></div>
<div class="b" style="left:0px;top:1833.5px;width:1783px;height:31px;background:#FEFEFE;"></div>
<div class="b" style="left:6px;top:1842px;width:540.6px;height:13.8px;background:#C1C1C1;border-radius:7px;"></div>
<div class="b" style="left:1792px;top:100px;width:1800px;height:1800px;border:2px solid #CDD7E1;border-radius:10px;background:#FBFCFE;"></div>
<div class="b" style="left:1794px;top:102px;width:1786px;height:58px;background:#F0F4F8;border-bottom:2px solid #CDD7E1;border-radius:8px 0 0 0;"></div>
<span class="t" style="left:1847.50px;top:118.80px;font-size:22.5px;color:#25282C;letter-spacing:-0.017px;">Active Chart</span>
<div class="b" style="left:2009px;top:116px;width:2px;height:30px;background:#CDD7E1;"></div>
<span class="t" style="left:2061.50px;top:118.80px;font-size:22.5px;color:#25282C;letter-spacing:-0.349px;">Coverage</span>
<div class="b" style="left:2208.2px;top:102px;width:438.6px;height:58px;background:#FBFCFE;border-top:4px solid #32383E;border-left:2px solid #CDD7E1;border-right:2px solid #CDD7E1;"></div>
<span class="t" style="left:2231.80px;top:118.80px;font-size:22.5px;color:#25282C;letter-spacing:0.087px;">Data Product: ivoa.ObsCore - data-i…</span>
<span class="t" style="left:2710.50px;top:118.80px;font-size:22.5px;color:#25282C;letter-spacing:0.346px;">Details</span>
<div class="b" style="left:2846px;top:116px;width:2px;height:30px;background:#CDD7E1;"></div>
<span class="t" style="left:1822.50px;top:178.00px;font-size:26.2px;color:#32383E;letter-spacing:-0.266px;">More</span>
<svg class="b" style="left:1903.7px;top:187.6px;" width="19.4" height="11.4" viewBox="0 0 19.4 11.4"><path d="M2 0.4H17.4Q19.9 0.6 18.2 2.6L11 10.4Q9.7 11.6 8.4 10.4L1.2 2.6Q-0.5 0.6 2 0.4Z" fill="#636B74"/></svg>
<div class="b" style="left:1986px;top:165px;width:2px;height:54px;background:#D4D8DE;"></div>
<span class="t" style="left:2017.50px;top:178.00px;font-size:26.2px;color:#32383E;letter-spacing:-0.108px;">File Contents</span>
<svg class="b" style="left:2193.1px;top:187.6px;" width="19.4" height="11.4" viewBox="0 0 19.4 11.4"><path d="M2 0.4H17.4Q19.9 0.6 18.2 2.6L11 10.4Q9.7 11.6 8.4 10.4L1.2 2.6Q-0.5 0.6 2 0.4Z" fill="#636B74"/></svg>
<svg class="b" style="left:2248.6px;top:167.2px;" width="50.5" height="50.5" viewBox="0 0 24 24"><path fill="#32383E" fill-rule="evenodd" d="M16 9V4h1c.55 0 1-.45 1-1s-.45-1-1-1H7c-.55 0-1 .45-1 1s.45 1 1 1h1v5c0 1.66-1.34 3-3 3v2h5.97v7l1 1 1-1v-7H19v-2c-1.66 0-3-1.34-3-3z"/></svg>
<div class="b" style="left:2322px;top:160px;width:2px;height:64px;background:#D4D8DE;"></div>
<div class="b" style="left:2340.2px;top:162.1px;width:116.7px;height:59.9px;border:2px solid #CDD7E1;border-radius:12px;background:linear-gradient(90deg,#DFE6EE 0,#DFE6EE 55.7px,#CDD7E1 55.7px,#CDD7E1 57.7px,#FBFCFE 57.7px);"></div>
<div class="b" style="left:2352.1px;top:174px;width:35.4px;height:35.8px;background:#32383E;border-radius:4.5px;"></div>
<div class="b" style="left:2409.1px;top:178.1px;width:10.2px;height:12.4px;background:#676C76;border-radius:1.6px;"></div>
<div class="b" style="left:2421.7px;top:178.1px;width:10.2px;height:12.4px;background:#676C76;border-radius:1.6px;"></div>
<div class="b" style="left:2434.2999999999997px;top:178.1px;width:10.2px;height:12.4px;background:#676C76;border-radius:1.6px;"></div>
<div class="b" style="left:2409.1px;top:193.0px;width:10.2px;height:12.4px;background:#676C76;border-radius:1.6px;"></div>
<div class="b" style="left:2421.7px;top:193.0px;width:10.2px;height:12.4px;background:#676C76;border-radius:1.6px;"></div>
<div class="b" style="left:2434.2999999999997px;top:193.0px;width:10.2px;height:12.4px;background:#676C76;border-radius:1.6px;"></div>
<svg class="b" style="left:3064.5px;top:161.9px;" width="57.6" height="57.6" viewBox="0 0 24 24"><g transform="rotate(8 12 12) translate(24 0) scale(-1 1)"><path fill="#32383E" d="m13.7826 15.1719 2.1213-2.1213 5.9963 5.9962-2.1213 2.1213zM17.5 10c1.93 0 3.5-1.57 3.5-3.5 0-.58-.16-1.12-.41-1.6l-2.7 2.7-1.49-1.49 2.7-2.7c-.48-.25-1.02-.41-1.6-.41C15.57 3 14 4.57 14 6.5c0 .41.08.8.21 1.16l-1.85 1.85-1.78-1.78.71-.71-1.41-1.41L12 3.49c-1.17-1.17-3.07-1.17-4.24 0L4.22 7.03l1.41 1.41H2.81l-.71.71 3.54 3.54.71-.71V9.15l1.41 1.41.71-.71 1.78 1.78-7.41 7.41 2.12 2.12L16.34 9.79c.36.13.75.21 1.16.21z"/></g></svg>
<svg class="b" style="left:3069.1px;top:210.1px;" width="21.8" height="13.6" viewBox="0 0 21.8 13.6"><path d="M2.2 0.6H19.6Q22.400000000000002 0.8 20.2 3.4L12.5 12.6Q10.9 14.0 9.3 12.6L1.6 3.4Q-0.6 0.8 2.2 0.6Z" fill="#32383E"/></svg>
<div class="b" style="left:3142px;top:160px;width:2px;height:64px;background:#D4D8DE;"></div>
<svg class="b" style="left:3165.7px;top:164.9px;" width="53.4" height="53.4" viewBox="0 0 24 24"><g fill="#32383E"><path d="M12 22C6.49 22 2 17.51 2 12S6.49 2 12 2s10 4.04 10 9c0 3.31-2.69 6-6 6h-1.77c-.28 0-.5.22-.5.5 0 .12.05.23.13.33.41.47.64 1.06.64 1.67 0 1.38-1.12 2.5-2.5 2.5zm0-18c-4.41 0-8 3.59-8 8s3.59 8 8 8c.28 0 .5-.22.5-.5 0-.16-.08-.28-.14-.35-.41-.46-.63-1.05-.63-1.65 0-1.38 1.12-2.5 2.5-2.5H16c2.21 0 4-1.79 4-4 0-3.86-3.59-7-8-7z"/><circle cx="6.5" cy="11.5" r="1.5"/><circle cx="9.5" cy="7.5" r="1.5"/><circle cx="14.5" cy="7.5" r="1.5"/><circle cx="17.5" cy="11.5" r="1.5"/></g></svg>
<svg class="b" style="left:3158.2px;top:210.1px;" width="21.8" height="13.6" viewBox="0 0 21.8 13.6"><path d="M2.2 0.6H19.6Q22.400000000000002 0.8 20.2 3.4L12.5 12.6Q10.9 14.0 9.3 12.6L1.6 3.4Q-0.6 0.8 2.2 0.6Z" fill="#32383E"/></svg>
<svg class="b" style="left:3231px;top:169.9px;" width="48" height="36" viewBox="0 0 48 36"><rect x="0" y="0" width="48" height="36" fill="#000"/><rect x="3" y="2.5" width="42" height="29" fill="#fff"/><rect x="7.4" y="2.5" width="1.8" height="29" fill="#000"/><rect x="41" y="2.5" width="1.4" height="29" fill="#000"/><path fill="#777" d="M4 31.5V26L5.5 22L6.5 27V31.5Z M9.5 31.5V14L11 8L12.5 4.5L14 7L16 7.5L17.5 12L19 15L20 17.5L21.5 15L22.5 19L24 15.5L25 21L26.5 16L27.5 22L29 21.5L30.5 26L32 29L33.5 31L35 28L36.5 30L38 27.5L39.5 25L40.5 28V31.5Z M43 31.5V29L44 27L45 30V31.5Z"/></svg>
<svg class="b" style="left:3226.9px;top:207.2px;" width="21.8" height="13.6" viewBox="0 0 21.8 13.6"><path d="M2.2 0.6H19.6Q22.400000000000002 0.8 20.2 3.4L12.5 12.6Q10.9 14.0 9.3 12.6L1.6 3.4Q-0.6 0.8 2.2 0.6Z" fill="#32383E"/></svg>
<svg class="b" style="left:3290.8px;top:164.9px;" width="53.4" height="53.4" viewBox="0 0 24 24"><path fill="#32383E" d="M5 15H3v4c0 1.1.9 2 2 2h4v-2H5v-4zM5 5h4V3H5c-1.1 0-2 .9-2 2v4h2V5zm14-2h-4v2h4v4h2V5c0-1.1-.9-2-2-2zm0 16h-4v2h4c1.1 0 2-.9 2-2v-4h-2v4zM12 8c-2.21 0-4 1.79-4 4s1.79 4 4 4 4-1.79 4-4-1.79-4-4-4zm0 6c-1.1 0-2-.9-2-2s.9-2 2-2 2 .9 2 2-.9 2-2 2z"/></svg>
<svg class="b" style="left:3287px;top:210.1px;" width="21.8" height="13.6" viewBox="0 0 21.8 13.6"><path d="M2.2 0.6H19.6Q22.400000000000002 0.8 20.2 3.4L12.5 12.6Q10.9 14.0 9.3 12.6L1.6 3.4Q-0.6 0.8 2.2 0.6Z" fill="#32383E"/></svg>
<svg class="b" style="left:3357px;top:167.4px;" width="48" height="48" viewBox="0 0 48 48"><circle cx="24" cy="24" r="21.2" fill="none" stroke="#222" stroke-width="1.7" stroke-dasharray="2.4 1.7"/></svg>
<svg class="b" style="left:3353.1px;top:207.2px;" width="21.8" height="13.6" viewBox="0 0 21.8 13.6"><path d="M2.2 0.6H19.6Q22.400000000000002 0.8 20.2 3.4L12.5 12.6Q10.9 14.0 9.3 12.6L1.6 3.4Q-0.6 0.8 2.2 0.6Z" fill="#32383E"/></svg>
<svg class="b" style="left:3412.5px;top:167.4px;" width="57.6" height="57.6" viewBox="0 0 24 24"><path fill="#32383E" d="m11.99 18.54-7.37-5.73L3 14.07l9 7 9-7-1.63-1.27-7.38 5.74zM12 16l7.36-5.73L21 9l-9-7-9 7 1.63 1.27L12 16z"/></svg>
<div class="b" style="left:3448.2px;top:160.8px;width:33.4px;height:35.8px;background:#FBFCFE;border-radius:50%;"></div>
<div class="b" style="left:3450.9px;top:163.4px;width:28px;height:30.6px;background:#3F6DC5;border-radius:50%;"></div>
<span class="t" style="left:3459.90px;top:168.40px;font-size:19px;color:#fff;">2</span>
<svg class="b" style="left:3481.9px;top:162.2px;" width="50" height="50" viewBox="0 0 24 24"><path fill="#32383E" d="M17 7h-4v1.9h4c1.71 0 3.1 1.39 3.1 3.1 0 1.43-.98 2.63-2.31 2.98l1.46 1.46C20.88 15.61 22 13.95 22 12c0-2.76-2.24-5-5-5zm-1 4h-2.19l2 2H16zM2 4.27l3.11 3.11C3.29 8.12 2 9.91 2 12c0 2.76 2.24 5 5 5h4v-1.9H7c-1.71 0-3.1-1.39-3.1-3.1 0-1.59 1.21-2.9 2.76-3.07L8.73 11H8v2h2.73L13 15.27V17h1.73l4.01 4L20 19.74 3.27 3 2 4.27z"/></svg>
<svg class="b" style="left:3484px;top:207.2px;" width="21.8" height="13.6" viewBox="0 0 21.8 13.6"><path d="M2.2 0.6H19.6Q22.400000000000002 0.8 20.2 3.4L12.5 12.6Q10.9 14.0 9.3 12.6L1.6 3.4Q-0.6 0.8 2.2 0.6Z" fill="#32383E"/></svg>
<svg class="b" style="left:3544.9px;top:174.6px;" width="36" height="35" viewBox="0 0 36 35"><path d="M0 0H15L0 14.8Z M35.5 34.5H20.5L35.5 19.7Z" fill="#32383E"/><path d="M5 5L30.5 29.5" stroke="#32383E" stroke-width="4.4"/></svg>
<div class="b" style="left:1794px;top:224px;width:1790px;height:1644px;background:#DFE0E2;"></div>
<div class="b" style="left:1797px;top:232px;width:1781px;height:1640px;background:#FBFCFE;border-radius:7px 7px 0 0;"></div>
<svg class="b" style="left:1861px;top:286px;" width="1662" height="1546" viewBox="0 0 1662 1546"><defs>
<filter id="nz" x="0" y="0" width="100%" height="100%" color-interpolation-filters="sRGB">
<feTurbulence type="fractalNoise" baseFrequency="0.27" numOctaves="3" seed="11" result="n"/>
<feGaussianBlur in="n" stdDeviation="0.9" result="nb"/>
<feColorMatrix in="nb" type="matrix" values="0.34 0 0 0 0.665  0.34 0 0 0 0.665  0.34 0 0 0 0.665  0 0 0 0 1"/>
</filter>
<filter id="sb" x="-5%" y="-5%" width="110%" height="110%"><feGaussianBlur stdDeviation="1.25"/></filter>
<filter id="sb2" x="-5%" y="-5%" width="110%" height="110%"><feGaussianBlur stdDeviation="3.2"/></filter>
</defs>
<rect x="0" y="0" width="1662" height="1546" fill="#D8D8D8"/><rect x="0" y="0" width="1662" height="1546" filter="url(#nz)"/><g filter="url(#sb2)" fill="#000"><circle cx="992.8" cy="29.1" r="8.0" fill-opacity=".22"/><circle cx="1401.4" cy="72.4" r="7.2" fill-opacity=".22"/><circle cx="1606.5" cy="372.1" r="8.0" fill-opacity=".22"/><circle cx="447.6" cy="484.9" r="7.2" fill-opacity=".22"/><circle cx="39.1" cy="989.4" r="7.2" fill-opacity=".22"/><circle cx="524.5" cy="1130.3" r="10.2" fill-opacity=".22"/><circle cx="1117.5" cy="792.4" r="8.7" fill-opacity=".22"/><circle cx="983.5" cy="988.8" r="8.7" fill-opacity=".22"/><circle cx="1055.5" cy="1059.5" r="8.7" fill-opacity=".22"/><circle cx="11.3" cy="1361.9" r="14.5" fill-opacity=".22"/><circle cx="1054.8" cy="1329.0" r="13.8" fill-opacity=".22"/><circle cx="1353.0" cy="1274.4" r="8.7" fill-opacity=".22"/></g><g filter="url(#sb)" fill="#000"><circle cx="17.7" cy="86.2" r="4.2"/><circle cx="38.4" cy="123.7" r="2.4" fill-opacity="0.92"/><circle cx="231.6" cy="70.7" r="2.8" fill-opacity="0.92"/><circle cx="216.7" cy="82.7" r="1.9" fill-opacity=".4"/><circle cx="178.6" cy="138.9" r="2.0" fill-opacity="0.85"/><circle cx="283.2" cy="137.0" r="2.4" fill-opacity="0.92"/><circle cx="281.3" cy="141.5" r="2.4" fill-opacity="0.92"/><circle cx="167.0" cy="174.4" r="2.0" fill-opacity="0.85"/><circle cx="150.8" cy="190.9" r="2.4" fill-opacity="0.92"/><circle cx="261.3" cy="193.8" r="1.9" fill-opacity=".4"/><circle cx="288.1" cy="198.6" r="2.0" fill-opacity="0.85"/><circle cx="341.4" cy="198.6" r="1.4" fill-opacity=".4"/><circle cx="61.3" cy="219.3" r="2.0" fill-opacity="0.85"/><circle cx="381.1" cy="237.4" r="2.4" fill-opacity=".4"/><circle cx="409.2" cy="226.1" r="1.4" fill-opacity=".4"/><circle cx="460.9" cy="94.3" r="2.4" fill-opacity="0.92"/><circle cx="443.1" cy="57.2" r="1.9" fill-opacity=".4"/><circle cx="519.0" cy="4.8" r="1.6" fill-opacity="0.7"/><circle cx="641.1" cy="13.6" r="2.8" fill-opacity="0.92"/><circle cx="734.1" cy="49.4" r="2.4" fill-opacity="0.92"/><circle cx="667.0" cy="109.8" r="2.0" fill-opacity="0.85"/><circle cx="730.9" cy="104.0" r="2.0" fill-opacity="0.85"/><circle cx="759.3" cy="113.7" r="2.0" fill-opacity="0.85"/><circle cx="721.2" cy="146.0" r="2.0" fill-opacity="0.85"/><circle cx="747.7" cy="212.5" r="2.4" fill-opacity=".4"/><circle cx="610.1" cy="229.3" r="2.0" fill-opacity="0.85"/><circle cx="673.4" cy="231.3" r="2.0" fill-opacity="0.85"/><circle cx="626.3" cy="248.7" r="2.4" fill-opacity="0.92"/><circle cx="489.3" cy="259.7" r="3.5"/><circle cx="548.1" cy="270.0" r="2.0" fill-opacity="0.85"/><circle cx="407.6" cy="277.5" r="4.2"/><circle cx="233.2" cy="284.9" r="2.0" fill-opacity="0.85"/><circle cx="122.1" cy="292.6" r="1.6" fill-opacity="0.7"/><circle cx="517.4" cy="303.0" r="3.5"/><circle cx="287.1" cy="321.7" r="2.0" fill-opacity="0.85"/><circle cx="89.1" cy="328.5" r="1.6" fill-opacity="0.7"/><circle cx="562.6" cy="352.7" r="2.4" fill-opacity="0.92"/><circle cx="749.6" cy="289.1" r="1.6" fill-opacity="0.7"/><circle cx="785.8" cy="327.5" r="2.4" fill-opacity=".4"/><circle cx="758.7" cy="366.0" r="1.6" fill-opacity="0.7"/><circle cx="202.8" cy="377.9" r="2.0" fill-opacity="0.85"/><circle cx="51.6" cy="261.0" r="1.9" fill-opacity=".4"/><circle cx="140.1" cy="202.2" r="1.9" fill-opacity=".4"/><circle cx="630.5" cy="227.1" r="1.4" fill-opacity=".4"/><circle cx="697.3" cy="230.6" r="1.4" fill-opacity=".4"/><circle cx="733.2" cy="188.3" r="1.4" fill-opacity=".4"/><circle cx="295.5" cy="307.8" r="1.9" fill-opacity=".4"/><circle cx="499.6" cy="315.9" r="1.4" fill-opacity=".4"/><circle cx="566.8" cy="332.0" r="1.4" fill-opacity=".4"/><circle cx="992.8" cy="29.1" r="5.5"/><circle cx="1075.8" cy="42.0" r="2.4" fill-opacity="0.92"/><circle cx="1194.7" cy="2.9" r="2.4" fill-opacity="0.92"/><circle cx="1403.4" cy="7.1" r="2.0" fill-opacity="0.85"/><circle cx="1342.6" cy="38.4" r="1.6" fill-opacity="0.7"/><circle cx="1401.4" cy="72.4" r="5.0"/><circle cx="1396.2" cy="92.7" r="2.0" fill-opacity="0.85"/><circle cx="1398.2" cy="104.3" r="1.6" fill-opacity="0.7"/><circle cx="1447.6" cy="117.2" r="2.8" fill-opacity="0.92"/><circle cx="1376.9" cy="146.6" r="3.5"/><circle cx="1418.2" cy="183.1" r="4.2"/><circle cx="1560.3" cy="190.9" r="2.4" fill-opacity=".4"/><circle cx="1241.2" cy="164.7" r="2.0" fill-opacity="0.85"/><circle cx="1153.4" cy="147.0" r="1.6" fill-opacity="0.7"/><circle cx="1022.2" cy="144.7" r="2.0" fill-opacity="0.85"/><circle cx="997.7" cy="102.7" r="2.0" fill-opacity="0.85"/><circle cx="978.6" cy="111.1" r="1.6" fill-opacity="0.7"/><circle cx="961.2" cy="118.9" r="2.0" fill-opacity="0.85"/><circle cx="953.1" cy="94.3" r="1.6" fill-opacity="0.7"/><circle cx="909.2" cy="150.5" r="1.6" fill-opacity="0.7"/><circle cx="927.9" cy="151.8" r="2.0" fill-opacity="0.85"/><circle cx="1004.4" cy="182.8" r="2.0" fill-opacity="0.85"/><circle cx="832.6" cy="185.4" r="2.0" fill-opacity="0.85"/><circle cx="1095.9" cy="71.7" r="1.9" fill-opacity=".4"/><circle cx="1051.6" cy="56.8" r="1.9" fill-opacity=".4"/><circle cx="1070.0" cy="111.4" r="1.9" fill-opacity=".4"/><circle cx="1114.6" cy="130.8" r="2.4" fill-opacity=".4"/><circle cx="1365.6" cy="59.8" r="2.8" fill-opacity=".4"/><circle cx="1315.5" cy="228.4" r="1.6" fill-opacity="0.7"/><circle cx="1462.1" cy="203.5" r="1.9" fill-opacity=".4"/><circle cx="1432.4" cy="219.0" r="1.9" fill-opacity=".4"/><circle cx="1521.6" cy="240.6" r="2.4" fill-opacity=".4"/><circle cx="1160.8" cy="275.2" r="2.4" fill-opacity="0.92"/><circle cx="1225.7" cy="281.3" r="2.4" fill-opacity="0.92"/><circle cx="1196.0" cy="289.7" r="2.4" fill-opacity="0.92"/><circle cx="1124.6" cy="297.5" r="2.0" fill-opacity="0.85"/><circle cx="1336.8" cy="278.7" r="2.0" fill-opacity="0.85"/><circle cx="1313.9" cy="297.2" r="2.4" fill-opacity="0.92"/><circle cx="1256.1" cy="306.8" r="1.6" fill-opacity="0.7"/><circle cx="1315.8" cy="329.5" r="2.8" fill-opacity="0.92"/><circle cx="919.5" cy="338.5" r="2.4" fill-opacity="0.92"/><circle cx="1384.0" cy="359.5" r="2.0" fill-opacity="0.85"/><circle cx="1606.5" cy="372.1" r="5.5"/><circle cx="1594.6" cy="279.4" r="1.6" fill-opacity="0.7"/><circle cx="1422.7" cy="323.6" r="1.9" fill-opacity=".4"/><circle cx="1402.7" cy="378.6" r="1.6" fill-opacity="0.7"/><circle cx="1136.2" cy="261.6" r="1.9" fill-opacity=".4"/><circle cx="1582.3" cy="347.2" r="1.4" fill-opacity=".4"/><circle cx="1130.7" cy="35.5" r="1.4" fill-opacity=".4"/><circle cx="1098.4" cy="16.1" r="1.4" fill-opacity=".4"/><circle cx="524.8" cy="389.9" r="2.8" fill-opacity="0.92"/><circle cx="605.9" cy="413.8" r="2.4" fill-opacity="0.92"/><circle cx="598.8" cy="403.5" r="1.9" fill-opacity=".4"/><circle cx="447.6" cy="484.9" r="5.0"/><circle cx="389.5" cy="489.7" r="2.0" fill-opacity="0.85"/><circle cx="545.2" cy="485.8" r="2.4" fill-opacity="0.92"/><circle cx="614.3" cy="496.5" r="2.0" fill-opacity="0.85"/><circle cx="192.2" cy="527.2" r="2.0" fill-opacity="0.85"/><circle cx="381.1" cy="538.5" r="2.4" fill-opacity="0.92"/><circle cx="558.4" cy="552.1" r="2.4" fill-opacity="0.92"/><circle cx="53.6" cy="570.1" r="2.8" fill-opacity="0.92"/><circle cx="194.1" cy="554.6" r="1.9" fill-opacity=".4"/><circle cx="209.6" cy="555.6" r="1.4" fill-opacity=".4"/><circle cx="662.4" cy="581.4" r="2.4" fill-opacity="0.92"/><circle cx="788.7" cy="568.2" r="1.9" fill-opacity=".4"/><circle cx="238.0" cy="598.6" r="3.5"/><circle cx="150.8" cy="619.6" r="2.8" fill-opacity="0.92"/><circle cx="131.4" cy="618.3" r="1.9" fill-opacity=".4"/><circle cx="697.0" cy="643.1" r="1.6" fill-opacity="0.7"/><circle cx="667.6" cy="659.6" r="2.0" fill-opacity="0.85"/><circle cx="812.6" cy="666.4" r="2.4" fill-opacity="0.92"/><circle cx="320.7" cy="673.5" r="2.4" fill-opacity="0.92"/><circle cx="563.0" cy="683.8" r="2.0" fill-opacity="0.85"/><circle cx="175.0" cy="693.8" r="2.4" fill-opacity="0.92"/><circle cx="354.0" cy="692.6" r="1.6" fill-opacity="0.7"/><circle cx="385.0" cy="696.4" r="2.0" fill-opacity="0.85"/><circle cx="262.2" cy="704.2" r="3.5"/><circle cx="767.7" cy="698.7" r="1.6" fill-opacity="0.7"/><circle cx="715.4" cy="716.8" r="1.6" fill-opacity="0.7"/><circle cx="287.1" cy="726.8" r="4.2"/><circle cx="121.4" cy="768.8" r="2.8" fill-opacity="0.92"/><circle cx="670.5" cy="772.3" r="2.4" fill-opacity="0.92"/><circle cx="686.7" cy="764.3" r="1.6" fill-opacity="0.7"/><circle cx="327.8" cy="557.2" r="1.4" fill-opacity=".4"/><circle cx="276.8" cy="544.6" r="1.4" fill-opacity=".4"/><circle cx="418.9" cy="519.8" r="1.4" fill-opacity=".4"/><circle cx="565.9" cy="595.7" r="1.9" fill-opacity=".4"/><circle cx="159.9" cy="439.6" r="1.9" fill-opacity=".4"/><circle cx="233.8" cy="432.2" r="1.9" fill-opacity=".4"/><circle cx="85.2" cy="432.5" r="1.4" fill-opacity=".4"/><circle cx="386.9" cy="647.7" r="1.4" fill-opacity=".4"/><circle cx="417.9" cy="714.8" r="1.4" fill-opacity=".4"/><circle cx="978.6" cy="399.9" r="2.4" fill-opacity="0.92"/><circle cx="888.5" cy="424.5" r="2.0" fill-opacity="0.85"/><circle cx="896.6" cy="425.8" r="2.4" fill-opacity=".4"/><circle cx="1155.9" cy="418.3" r="2.4" fill-opacity="0.92"/><circle cx="1160.1" cy="457.7" r="2.4" fill-opacity="0.92"/><circle cx="922.4" cy="471.0" r="2.8" fill-opacity=".4"/><circle cx="1098.4" cy="484.2" r="2.8" fill-opacity="0.92"/><circle cx="1409.8" cy="409.0" r="1.6" fill-opacity="0.7"/><circle cx="1409.2" cy="412.8" r="1.2" fill-opacity="0.7"/><circle cx="1607.8" cy="433.8" r="2.4" fill-opacity="0.92"/><circle cx="1638.5" cy="468.7" r="2.4" fill-opacity="0.92"/><circle cx="1413.7" cy="493.9" r="1.9" fill-opacity=".4"/><circle cx="1427.6" cy="496.8" r="1.9" fill-opacity=".4"/><circle cx="874.0" cy="508.8" r="1.2" fill-opacity="0.7"/><circle cx="884.9" cy="520.7" r="1.6" fill-opacity="0.7"/><circle cx="1595.9" cy="520.1" r="2.4" fill-opacity=".4"/><circle cx="995.1" cy="537.8" r="2.4" fill-opacity="0.92"/><circle cx="1220.5" cy="545.9" r="3.5"/><circle cx="1326.8" cy="547.9" r="3.5"/><circle cx="1347.1" cy="553.3" r="4.2"/><circle cx="1419.5" cy="540.1" r="2.4" fill-opacity="0.92"/><circle cx="1001.2" cy="566.9" r="2.0" fill-opacity="0.85"/><circle cx="1022.2" cy="577.9" r="2.0" fill-opacity="0.85"/><circle cx="1197.3" cy="574.7" r="2.0" fill-opacity="0.85"/><circle cx="1227.0" cy="573.0" r="1.6" fill-opacity="0.7"/><circle cx="1249.6" cy="571.8" r="2.0" fill-opacity="0.85"/><circle cx="1363.3" cy="574.3" r="2.4" fill-opacity="0.92"/><circle cx="1521.2" cy="571.4" r="2.8" fill-opacity="0.92"/><circle cx="1518.7" cy="592.7" r="4.2"/><circle cx="1459.2" cy="615.0" r="1.6" fill-opacity="0.7"/><circle cx="1220.9" cy="613.1" r="2.4" fill-opacity="0.92"/><circle cx="1247.7" cy="624.4" r="2.0" fill-opacity="0.85"/><circle cx="1283.2" cy="620.2" r="1.6" fill-opacity="0.7"/><circle cx="1101.3" cy="615.7" r="2.4" fill-opacity="0.92"/><circle cx="1115.9" cy="619.2" r="2.8" fill-opacity="0.92"/><circle cx="1056.8" cy="627.6" r="2.4" fill-opacity="0.92"/><circle cx="1119.1" cy="637.3" r="2.4" fill-opacity="0.92"/><circle cx="1057.1" cy="656.7" r="2.0" fill-opacity="0.85"/><circle cx="1188.2" cy="656.1" r="2.0" fill-opacity="0.85"/><circle cx="1367.5" cy="655.7" r="2.0" fill-opacity="0.85"/><circle cx="992.8" cy="681.6" r="2.0" fill-opacity="0.85"/><circle cx="1053.9" cy="687.4" r="1.6" fill-opacity="0.7"/><circle cx="1083.6" cy="699.3" r="2.8" fill-opacity="0.92"/><circle cx="1299.3" cy="687.1" r="2.8" fill-opacity="0.92"/><circle cx="1299.3" cy="692.2" r="1.2" fill-opacity="0.7"/><circle cx="1268.3" cy="706.8" r="2.0" fill-opacity="0.85"/><circle cx="1434.0" cy="701.6" r="2.4" fill-opacity="0.92"/><circle cx="1626.5" cy="669.9" r="2.0" fill-opacity="0.85"/><circle cx="880.1" cy="732.6" r="2.4" fill-opacity=".4"/><circle cx="974.1" cy="758.4" r="2.4" fill-opacity="0.92"/><circle cx="1258.0" cy="759.4" r="1.9" fill-opacity=".4"/><circle cx="1269.3" cy="759.1" r="1.9" fill-opacity=".4"/><circle cx="1581.0" cy="739.7" r="1.9" fill-opacity=".4"/><circle cx="1292.2" cy="394.4" r="1.9" fill-opacity=".4"/><circle cx="1278.4" cy="405.4" r="1.4" fill-opacity=".4"/><circle cx="1190.2" cy="678.7" r="1.4" fill-opacity=".4"/><circle cx="1197.3" cy="691.6" r="1.9" fill-opacity=".4"/><circle cx="1122.0" cy="555.0" r="1.9" fill-opacity=".4"/><circle cx="1553.5" cy="542.0" r="1.9" fill-opacity=".4"/><circle cx="1436.0" cy="598.9" r="1.9" fill-opacity=".4"/><circle cx="1074.2" cy="606.0" r="1.4" fill-opacity=".4"/><circle cx="1512.5" cy="536.5" r="1.4" fill-opacity=".4"/><circle cx="1349.7" cy="644.1" r="1.9" fill-opacity=".4"/><circle cx="1260.6" cy="647.0" r="1.4" fill-opacity=".4"/><circle cx="908.5" cy="631.5" r="1.9" fill-opacity=".4"/><circle cx="1311.3" cy="554.3" r="1.9" fill-opacity=".4"/><circle cx="1245.1" cy="546.6" r="1.9" fill-opacity=".4"/><circle cx="1438.2" cy="515.2" r="1.9" fill-opacity=".4"/><circle cx="966.7" cy="481.3" r="1.9" fill-opacity=".4"/><circle cx="1030.3" cy="488.1" r="1.4" fill-opacity=".4"/><circle cx="1645.9" cy="497.8" r="1.9" fill-opacity=".4"/><circle cx="459.3" cy="781.8" r="2.8" fill-opacity="0.92"/><circle cx="540.3" cy="790.1" r="2.4" fill-opacity="0.92"/><circle cx="495.4" cy="792.7" r="1.6" fill-opacity="0.7"/><circle cx="671.2" cy="774.6" r="2.0" fill-opacity="0.85"/><circle cx="770.0" cy="786.3" r="2.0" fill-opacity="0.85"/><circle cx="97.2" cy="795.0" r="1.6" fill-opacity="0.7"/><circle cx="13.2" cy="818.6" r="1.6" fill-opacity="0.7"/><circle cx="128.5" cy="821.8" r="2.8" fill-opacity="0.92"/><circle cx="37.8" cy="834.7" r="1.9" fill-opacity=".4"/><circle cx="285.8" cy="814.4" r="2.0" fill-opacity="0.85"/><circle cx="436.3" cy="814.7" r="1.6" fill-opacity="0.7"/><circle cx="448.9" cy="829.6" r="2.8" fill-opacity="0.92"/><circle cx="404.4" cy="811.8" r="1.9" fill-opacity=".4"/><circle cx="712.8" cy="825.7" r="2.4" fill-opacity="0.92"/><circle cx="595.6" cy="829.2" r="1.9" fill-opacity=".4"/><circle cx="469.3" cy="848.3" r="1.9" fill-opacity=".4"/><circle cx="771.9" cy="856.0" r="2.4" fill-opacity="0.92"/><circle cx="69.1" cy="871.5" r="2.4" fill-opacity="0.92"/><circle cx="139.8" cy="874.8" r="2.8" fill-opacity="0.92"/><circle cx="165.0" cy="879.6" r="2.4" fill-opacity="0.92"/><circle cx="66.8" cy="906.4" r="1.2" fill-opacity="0.7"/><circle cx="591.4" cy="919.3" r="1.9" fill-opacity=".4"/><circle cx="792.6" cy="923.9" r="2.4" fill-opacity=".4"/><circle cx="577.8" cy="954.6" r="2.0" fill-opacity="0.85"/><circle cx="577.2" cy="967.8" r="2.0" fill-opacity="0.85"/><circle cx="384.7" cy="976.5" r="1.9" fill-opacity=".4"/><circle cx="285.5" cy="980.1" r="1.9" fill-opacity=".4"/><circle cx="137.2" cy="983.0" r="1.9" fill-opacity=".4"/><circle cx="39.1" cy="989.4" r="5.0"/><circle cx="642.1" cy="986.2" r="2.0" fill-opacity="0.85"/><circle cx="794.9" cy="980.7" r="1.6" fill-opacity="0.7"/><circle cx="818.4" cy="994.9" r="1.6" fill-opacity="0.7"/><circle cx="127.2" cy="1015.6" r="2.0" fill-opacity="0.85"/><circle cx="118.5" cy="1013.0" r="1.2" fill-opacity="0.7"/><circle cx="704.1" cy="1015.9" r="1.9" fill-opacity=".4"/><circle cx="617.2" cy="1025.3" r="2.4" fill-opacity="0.92"/><circle cx="715.7" cy="1028.8" r="1.6" fill-opacity="0.7"/><circle cx="37.4" cy="1047.9" r="2.8" fill-opacity="0.92"/><circle cx="162.8" cy="1044.0" r="1.9" fill-opacity=".4"/><circle cx="319.1" cy="1042.1" r="1.9" fill-opacity=".4"/><circle cx="532.3" cy="1060.2" r="2.0" fill-opacity="0.85"/><circle cx="108.8" cy="1077.3" r="2.0" fill-opacity="0.85"/><circle cx="458.9" cy="1083.4" r="3.5"/><circle cx="217.0" cy="1094.1" r="2.0" fill-opacity="0.85"/><circle cx="287.8" cy="1093.4" r="3.5"/><circle cx="620.4" cy="1096.4" r="2.8" fill-opacity="0.92"/><circle cx="561.7" cy="1098.6" r="1.9" fill-opacity=".4"/><circle cx="790.7" cy="1092.2" r="2.4" fill-opacity="0.92"/><circle cx="136.9" cy="1118.3" r="2.0" fill-opacity="0.85"/><circle cx="140.1" cy="1123.5" r="1.6" fill-opacity="0.7"/><circle cx="524.5" cy="1130.3" r="7.0"/><circle cx="565.9" cy="1133.8" r="2.8" fill-opacity="0.92"/><circle cx="756.8" cy="1141.6" r="2.0" fill-opacity="0.85"/><circle cx="441.5" cy="1149.3" r="3.5"/><circle cx="85.6" cy="1155.8" r="2.8" fill-opacity="0.92"/><circle cx="693.4" cy="1106.0" r="1.4" fill-opacity=".4"/><circle cx="290.7" cy="1020.4" r="1.4" fill-opacity=".4"/><circle cx="225.1" cy="1019.5" r="1.9" fill-opacity=".4"/><circle cx="370.4" cy="1005.3" r="1.4" fill-opacity=".4"/><circle cx="301.0" cy="909.7" r="1.4" fill-opacity=".4"/><circle cx="276.8" cy="834.4" r="1.4" fill-opacity=".4"/><circle cx="1117.5" cy="792.4" r="6.0"/><circle cx="1250.9" cy="818.9" r="1.2" fill-opacity="0.7"/><circle cx="1504.1" cy="819.5" r="2.4" fill-opacity="0.92"/><circle cx="883.6" cy="854.4" r="1.6" fill-opacity="0.7"/><circle cx="950.8" cy="858.9" r="4.2"/><circle cx="1166.9" cy="858.0" r="4.2"/><circle cx="856.5" cy="879.6" r="2.4" fill-opacity="0.92"/><circle cx="897.9" cy="899.3" r="2.4" fill-opacity=".4"/><circle cx="861.4" cy="898.4" r="1.4" fill-opacity=".4"/><circle cx="1062.6" cy="914.2" r="2.4" fill-opacity=".4"/><circle cx="1061.6" cy="933.6" r="2.4" fill-opacity="0.92"/><circle cx="1106.5" cy="942.6" r="1.4" fill-opacity=".4"/><circle cx="1540.9" cy="923.2" r="2.0" fill-opacity="0.85"/><circle cx="1631.4" cy="865.4" r="2.4" fill-opacity=".4"/><circle cx="1597.1" cy="883.8" r="1.4" fill-opacity=".4"/><circle cx="1580.4" cy="978.8" r="2.0" fill-opacity="0.85"/><circle cx="983.5" cy="988.8" r="6.0"/><circle cx="1014.1" cy="1010.8" r="1.6" fill-opacity="0.7"/><circle cx="1014.8" cy="1026.9" r="2.4" fill-opacity="0.92"/><circle cx="1012.8" cy="1034.7" r="2.0" fill-opacity="0.85"/><circle cx="1043.5" cy="1032.7" r="2.0" fill-opacity="0.85"/><circle cx="1191.1" cy="1040.5" r="2.0" fill-opacity="0.85"/><circle cx="1372.0" cy="1029.8" r="2.8" fill-opacity="0.92"/><circle cx="1586.2" cy="1038.5" r="2.8" fill-opacity="0.92"/><circle cx="1055.5" cy="1059.5" r="6.0"/><circle cx="1005.4" cy="1066.3" r="2.0" fill-opacity="0.85"/><circle cx="1029.0" cy="1069.2" r="2.0" fill-opacity="0.85"/><circle cx="929.2" cy="1064.4" r="1.9" fill-opacity=".4"/><circle cx="866.5" cy="1074.4" r="2.0" fill-opacity="0.85"/><circle cx="914.7" cy="1084.7" r="4.2"/><circle cx="931.5" cy="1083.4" r="1.9" fill-opacity=".4"/><circle cx="1563.6" cy="1077.0" r="2.0" fill-opacity="0.85"/><circle cx="1368.8" cy="1088.3" r="2.0" fill-opacity="0.85"/><circle cx="1143.3" cy="1098.3" r="1.6" fill-opacity="0.7"/><circle cx="1511.2" cy="1102.5" r="1.6" fill-opacity="0.7"/><circle cx="895.9" cy="1105.1" r="2.8" fill-opacity=".4"/><circle cx="878.8" cy="1114.8" r="3.5"/><circle cx="916.3" cy="1038.9" r="1.9" fill-opacity=".4"/><circle cx="1451.2" cy="1123.5" r="2.4" fill-opacity=".4"/><circle cx="1222.5" cy="1122.8" r="1.4" fill-opacity=".4"/><circle cx="997.0" cy="1146.1" r="1.9" fill-opacity=".4"/><circle cx="991.9" cy="1151.9" r="1.9" fill-opacity=".4"/><circle cx="879.4" cy="1157.1" r="2.0" fill-opacity="0.85"/><circle cx="1114.6" cy="1157.4" r="2.8" fill-opacity=".4"/><circle cx="1592.0" cy="1122.8" r="1.4" fill-opacity=".4"/><circle cx="1283.2" cy="1086.3" r="1.4" fill-opacity=".4"/><circle cx="835.5" cy="986.5" r="1.9" fill-opacity=".4"/><circle cx="856.2" cy="984.3" r="1.4" fill-opacity=".4"/><circle cx="1531.9" cy="799.2" r="1.4" fill-opacity=".4"/><circle cx="1192.8" cy="799.2" r="1.4" fill-opacity=".4"/><circle cx="11.3" cy="1361.9" r="10.0"/><circle cx="356.9" cy="1186.2" r="1.6" fill-opacity="0.7"/><circle cx="106.9" cy="1229.2" r="2.0" fill-opacity="0.85"/><circle cx="45.8" cy="1245.3" r="2.0" fill-opacity="0.85"/><circle cx="525.5" cy="1208.8" r="1.6" fill-opacity="0.7"/><circle cx="499.0" cy="1219.5" r="2.8" fill-opacity=".4"/><circle cx="510.3" cy="1198.5" r="1.9" fill-opacity=".4"/><circle cx="570.7" cy="1226.6" r="2.8" fill-opacity="0.92"/><circle cx="751.3" cy="1208.8" r="1.6" fill-opacity="0.7"/><circle cx="790.7" cy="1212.4" r="1.9" fill-opacity=".4"/><circle cx="275.5" cy="1274.4" r="1.2" fill-opacity="0.7"/><circle cx="431.8" cy="1279.9" r="2.4" fill-opacity=".4"/><circle cx="813.6" cy="1284.7" r="3.5"/><circle cx="767.1" cy="1296.7" r="1.2" fill-opacity="0.7"/><circle cx="794.9" cy="1306.3" r="2.4" fill-opacity="0.92"/><circle cx="699.9" cy="1321.2" r="2.4" fill-opacity="0.92"/><circle cx="423.1" cy="1306.3" r="1.9" fill-opacity=".4"/><circle cx="387.6" cy="1329.9" r="2.4" fill-opacity=".4"/><circle cx="164.4" cy="1331.5" r="2.8" fill-opacity=".4"/><circle cx="593.0" cy="1336.4" r="2.0" fill-opacity="0.85"/><circle cx="818.4" cy="1358.7" r="2.4" fill-opacity=".4"/><circle cx="347.8" cy="1374.8" r="1.4" fill-opacity=".4"/><circle cx="191.5" cy="1389.0" r="2.0" fill-opacity="0.85"/><circle cx="654.0" cy="1400.7" r="4.2"/><circle cx="717.0" cy="1406.8" r="4.2"/><circle cx="459.3" cy="1408.7" r="2.8" fill-opacity="0.92"/><circle cx="764.5" cy="1411.6" r="1.9" fill-opacity=".4"/><circle cx="276.5" cy="1430.1" r="1.9" fill-opacity=".4"/><circle cx="373.7" cy="1433.6" r="2.4" fill-opacity="0.92"/><circle cx="382.4" cy="1429.7" r="1.4" fill-opacity=".4"/><circle cx="90.7" cy="1440.1" r="2.8" fill-opacity="0.92"/><circle cx="67.8" cy="1446.5" r="2.0" fill-opacity="0.85"/><circle cx="240.0" cy="1442.3" r="1.9" fill-opacity=".4"/><circle cx="103.0" cy="1458.2" r="1.6" fill-opacity="0.7"/><circle cx="246.4" cy="1466.6" r="1.6" fill-opacity="0.7"/><circle cx="341.4" cy="1453.0" r="1.4" fill-opacity=".4"/><circle cx="438.6" cy="1444.9" r="1.4" fill-opacity=".4"/><circle cx="477.0" cy="1429.1" r="1.4" fill-opacity=".4"/><circle cx="500.0" cy="1445.2" r="1.9" fill-opacity=".4"/><circle cx="822.6" cy="1454.0" r="2.0" fill-opacity="0.85"/><circle cx="499.6" cy="1468.8" r="2.0" fill-opacity="0.85"/><circle cx="511.0" cy="1476.6" r="1.9" fill-opacity=".4"/><circle cx="463.1" cy="1480.1" r="1.4" fill-opacity=".4"/><circle cx="551.3" cy="1486.6" r="1.9" fill-opacity=".4"/><circle cx="44.5" cy="1497.2" r="1.6" fill-opacity="0.7"/><circle cx="446.4" cy="1514.0" r="2.8" fill-opacity="0.92"/><circle cx="331.4" cy="1538.3" r="2.0" fill-opacity="0.85"/><circle cx="653.4" cy="1538.3" r="2.0" fill-opacity="0.85"/><circle cx="132.1" cy="1170.0" r="1.9" fill-opacity=".4"/><circle cx="23.5" cy="1170.7" r="1.4" fill-opacity=".4"/><circle cx="656.9" cy="1174.6" r="1.4" fill-opacity=".4"/><circle cx="1054.8" cy="1329.0" r="9.5"/><circle cx="1103.9" cy="1185.9" r="2.4" fill-opacity="0.92"/><circle cx="1086.8" cy="1169.1" r="2.8" fill-opacity=".4"/><circle cx="1132.7" cy="1244.0" r="4.2"/><circle cx="1352.0" cy="1223.7" r="2.4" fill-opacity="0.92"/><circle cx="1413.7" cy="1220.8" r="2.4" fill-opacity=".4"/><circle cx="1528.7" cy="1221.4" r="2.4" fill-opacity="0.92"/><circle cx="948.6" cy="1255.3" r="2.0" fill-opacity="0.85"/><circle cx="885.9" cy="1247.6" r="2.8" fill-opacity=".4"/><circle cx="996.1" cy="1256.0" r="2.4" fill-opacity=".4"/><circle cx="1058.4" cy="1221.7" r="2.4" fill-opacity=".4"/><circle cx="1353.0" cy="1274.4" r="6.0"/><circle cx="1408.2" cy="1257.6" r="2.0" fill-opacity="0.85"/><circle cx="1500.9" cy="1280.8" r="2.4" fill-opacity="0.92"/><circle cx="1522.2" cy="1278.2" r="1.9" fill-opacity=".4"/><circle cx="1029.3" cy="1314.4" r="2.0" fill-opacity="0.85"/><circle cx="1124.3" cy="1318.0" r="2.8" fill-opacity="0.92"/><circle cx="1126.5" cy="1309.6" r="1.6" fill-opacity="0.7"/><circle cx="1079.4" cy="1308.6" r="1.2" fill-opacity="0.7"/><circle cx="1263.8" cy="1318.6" r="2.4" fill-opacity="0.92"/><circle cx="1215.0" cy="1331.5" r="2.0" fill-opacity="0.85"/><circle cx="1525.1" cy="1326.1" r="2.0" fill-opacity="0.85"/><circle cx="970.9" cy="1339.6" r="1.6" fill-opacity="0.7"/><circle cx="1555.2" cy="1383.9" r="2.0" fill-opacity="0.85"/><circle cx="1585.5" cy="1403.9" r="2.0" fill-opacity="0.85"/><circle cx="1613.6" cy="1418.1" r="2.4" fill-opacity=".4"/><circle cx="1638.8" cy="1408.1" r="1.9" fill-opacity=".4"/><circle cx="1048.7" cy="1392.3" r="1.9" fill-opacity=".4"/><circle cx="987.0" cy="1394.2" r="1.4" fill-opacity=".4"/><circle cx="1350.1" cy="1429.7" r="2.4" fill-opacity=".4"/><circle cx="1410.1" cy="1414.6" r="1.9" fill-opacity=".4"/><circle cx="1529.6" cy="1428.8" r="1.4" fill-opacity=".4"/><circle cx="884.3" cy="1467.8" r="4.2"/><circle cx="849.1" cy="1479.8" r="4.2"/><circle cx="1108.8" cy="1473.7" r="2.0" fill-opacity="0.85"/><circle cx="1235.1" cy="1504.3" r="3.5"/><circle cx="1276.1" cy="1517.9" r="2.4" fill-opacity="0.92"/><circle cx="1269.6" cy="1522.4" r="1.6" fill-opacity="0.7"/><circle cx="1353.0" cy="1511.5" r="2.0" fill-opacity="0.85"/><circle cx="1579.7" cy="1513.4" r="2.8" fill-opacity="0.92"/><circle cx="1233.5" cy="1535.0" r="2.8" fill-opacity="0.92"/><circle cx="1585.2" cy="1469.1" r="1.6" fill-opacity="0.7"/><circle cx="1495.1" cy="1470.1" r="1.4" fill-opacity=".4"/><circle cx="1410.8" cy="1454.9" r="1.4" fill-opacity=".4"/><circle cx="1385.3" cy="1489.8" r="1.9" fill-opacity=".4"/><circle cx="1412.4" cy="1489.8" r="1.9" fill-opacity=".4"/><circle cx="1160.5" cy="1263.4" r="1.4" fill-opacity=".4"/><circle cx="1094.2" cy="1258.5" r="1.4" fill-opacity=".4"/><circle cx="1396.2" cy="1295.7" r="1.9" fill-opacity=".4"/><circle cx="1094.2" cy="1296.7" r="1.9" fill-opacity=".4"/><circle cx="1594.9" cy="1280.5" r="1.4" fill-opacity=".4"/><circle cx="1345.5" cy="1343.5" r="1.4" fill-opacity=".4"/></g><g stroke="#F7F74A" stroke-width="2" fill="none" opacity=".95"><circle cx="829.5" cy="761.2" r="16.2"/><path d="M809.0 761.2H822.5M836.5 761.2H850.0M829.5 740.7V754.2M829.5 768.2V781.7"/></g></svg>
<div class="b" style="left:1797px;top:232px;width:1781px;height:54.4px;background:#F0F3F7;border-radius:7px 7px 0 0;"></div>
<div class="b" style="left:1797px;top:232px;width:64px;height:54.4px;background:#F3F5F9;border-radius:7px 0 0 0;"></div>
<div class="b" style="left:3523px;top:232px;width:55px;height:54.4px;background:#F3F5F9;border-radius:0 7px 0 0;"></div>
<svg class="b" style="left:1861px;top:232px;" width="1717" height="54.4" viewBox="0 0 1717 54.4"><g fill="#5a6068" filter="url(#bb)"><ellipse cx="617" cy="6" rx="15" ry="9" fill-opacity=".10"/><ellipse cx="412" cy="21" rx="9" ry="7" fill-opacity=".07"/><ellipse cx="1557" cy="34" rx="15" ry="13" fill-opacity=".10"/><ellipse cx="1641" cy="23" rx="7" ry="6" fill-opacity=".09"/><ellipse cx="193" cy="14" rx="8" ry="7" fill-opacity=".06"/><ellipse cx="1127" cy="40" rx="9" ry="7" fill-opacity=".06"/></g><defs><filter id="bb" x="-5%" y="-50%" width="110%" height="200%"><feGaussianBlur stdDeviation="5"/></filter></defs></svg>
<span class="t" style="left:1947.60px;top:247.50px;font-size:22.5px;color:#4F5964;letter-spacing:-0.326px;font-weight:700;font-style:italic;">HDU (#1):</span>
<span class="t" style="left:2049.50px;top:247.50px;font-size:22.5px;color:#A0692E;letter-spacing:-1.851px;">IMAGE</span>
<svg class="b" style="left:2133.3px;top:244px;" width="19" height="30.6" viewBox="0 0 19 30.6"><path d="M16.2 2.8L3.4 15.3L16.2 27.8" stroke="#32383E" stroke-width="5.2" fill="none" stroke-linejoin="round" stroke-linecap="round"/></svg>
<svg class="b" style="left:2188.1px;top:244px;" width="19" height="30.6" viewBox="0 0 19 30.6"><path d="M2.8 2.8L15.6 15.3L2.8 27.8" stroke="#32383E" stroke-width="5.2" fill="none" stroke-linejoin="round" stroke-linecap="round"/></svg>
<span class="t" style="left:2223.80px;top:247.50px;font-size:22.5px;color:#555E68;letter-spacing:-0.039px;">1/ 3</span>
<div class="b" style="left:1797px;top:286.4px;width:535.8px;height:36.2px;background:rgba(246,248,251,.96);border-radius:0 0 9px 0;"></div>
<span class="t" style="left:1805.70px;top:292.70px;font-size:22.5px;color:#171A1C;letter-spacing:-0.346px;">calexp - r - 480303-R22_S00 - 2023-12-0…</span>
<span class="t" style="left:2248.10px;top:292.70px;font-size:22.5px;color:#555E68;letter-spacing:-0.849px;">FOV:14'</span>
<div class="b" style="left:1799.3px;top:1828.3px;width:1780px;height:35.2px;background:#EEF1F7;border:3.5px solid #D9DCE0;border-radius:9px;overflow:hidden;"></div>
<svg class="b" style="left:1812px;top:1831.8px;" width="36" height="28" viewBox="0 0 36 28"><path d="M22 0.5H3.7V27.5H32.3V12" stroke="#32383E" stroke-width="3.2" fill="none"/><path d="M12 20.5L31.5 1.5" stroke="#32383E" stroke-width="3.2" fill="none"/><path d="M24 1.6H32.4V10" stroke="#32383E" stroke-width="3.2" fill="none"/></svg>
<div class="b" style="left:1873.2px;top:1831.8px;width:108.7px;height:28.2px;background:#E3ECF8;border-radius:5px;"></div>
<span class="t" style="left:1884.00px;top:1835.80px;font-size:18.8px;color:#24406E;letter-spacing:-0.233px;">EQ-J2000:</span>
<div class="b" style="left:2361.8px;top:1831.8px;width:75.1px;height:28.2px;background:#E3ECF8;border-radius:5px;"></div>
<span class="t" style="left:2372.90px;top:1835.80px;font-size:18.8px;color:#24406E;letter-spacing:0.432px;">Value:</span>
<div class="b" style="left:3366.8px;top:1832.2px;width:52.2px;height:28px;background:#636B74;border-radius:14px;"></div>
<div class="b" style="left:3372.6px;top:1835.4px;width:20.4px;height:20.4px;background:#fff;border-radius:50%;"></div>
<span class="t" style="left:3430.30px;top:1832.70px;font-size:22.5px;color:#32383E;letter-spacing:0.115px;">Click Lock: off</span>
</div></body></html>
